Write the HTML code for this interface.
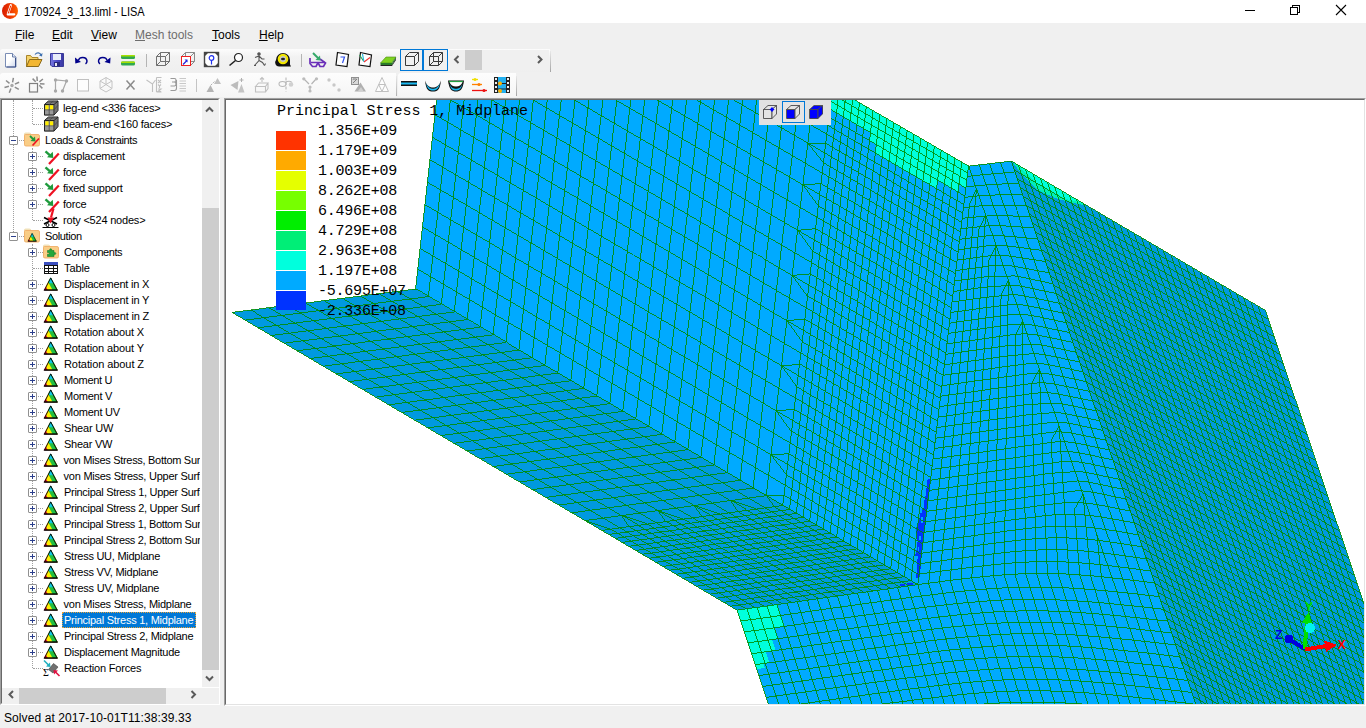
<!DOCTYPE html>
<html><head><meta charset="utf-8"><title>170924_3_13.liml - LISA</title>
<style>

html,body{margin:0;padding:0}
body{width:1366px;height:728px;overflow:hidden;position:relative;background:#f0f0f0;font-family:"Liberation Sans",sans-serif;font-size:12px;color:#000}
.abs{position:absolute}
#title{left:0;top:0;width:1366px;height:23px;background:#fff}
#title .t{left:23.5px;top:4.5px;font-size:12px;white-space:nowrap;transform:scaleX(0.918);transform-origin:0 0}
#menu span{position:absolute;top:28px;font-size:12px;white-space:nowrap}
#menu u{text-decoration:underline;text-underline-offset:1px}
.tb{background:#f8f8f8;border-radius:3px 0 0 3px}
#tree{left:0;top:98px;width:220px;height:607px;background:#fff;box-sizing:border-box;border:1px solid;border-color:#a0a0a0 #fff #fff #a0a0a0;overflow:hidden}
#treein{left:0;top:0;right:0;bottom:0;border:1px solid;border-color:#696969 #fff #fff #696969}
#tree .row{position:absolute;left:0;height:16px;line-height:16px;font-size:11px;white-space:nowrap}
#tree .lbl{position:absolute;top:0;height:16px;padding:0 1px}
#tree .sel{background:#0078d7;outline:1px dotted #e8a33a;outline-offset:-1px}
.exp{position:absolute;width:9px;height:9px;box-sizing:border-box;border:1px solid #919191;background:#fff;border-radius:1px}
.exp i{position:absolute;left:1px;top:3px;width:5px;height:1px;background:#2b3f8c}
.exp b{position:absolute;left:3px;top:1px;width:1px;height:5px;background:#2b3f8c}
.dotv{position:absolute;width:0;border-left:1px dotted #a0a0a0}
.doth{position:absolute;height:0;border-top:1px dotted #a0a0a0}
#vpb{left:224px;top:98px;width:1142px;height:608px;box-sizing:border-box;border:1px solid;border-color:#a0a0a0 #fff #fff #a0a0a0;background:#fff}
#vpb div{left:0;top:0;right:0;bottom:0;border:1px solid;border-color:#696969 #e3e3e3 #e3e3e3 #696969}
#status{left:4px;top:711px;font-size:12px;letter-spacing:0.09px;white-space:nowrap}

</style></head>
<body>
<div id="title" class="abs"><svg class="abs" style="left:1px;top:2px" width="18" height="18" viewBox="1 2 18 18"><linearGradient id="glogo" x1="0" y1="0" x2="1" y2="0"><stop offset="0" stop-color="#d81c00"/><stop offset="0.55" stop-color="#f03a00"/><stop offset="1" stop-color="#ff6200"/></linearGradient><circle cx="10" cy="10.900" r="8" fill="url(#glogo)"/><path d="M10.800 5.300L7.800 14.300H14.200" fill="none" stroke="#fff" stroke-width="2.300" stroke-linecap="round" stroke-linejoin="round"/><path d="M10.700 6L8.300 13.200" fill="none" stroke="#e83000" stroke-width="1" stroke-linecap="round"/></svg><div class="abs t">170924_3_13.liml - LISA</div><svg class="abs" style="left:1240px;top:0" width="126" height="23" viewBox="1240 0 126 23" shape-rendering="crispEdges" fill="none" stroke="#000" stroke-width="1"><path d="M1245 10.500h10"/><path d="M1290.500 7.500h7v7h-7z"/><path d="M1292.500 7.500v-2h7v7h-2"/><path d="M1336 5l10 10M1346 5l-10 10" shape-rendering="auto" stroke-width="1.100"/></svg></div><div id="menu"><span style="left:15px;color:#000"><u>F</u>ile</span><span style="left:52px;color:#000"><u>E</u>dit</span><span style="left:91px;color:#000"><u>V</u>iew</span><span style="left:135px;color:#6d6d6d"><u>M</u>esh tools</span><span style="left:212px;color:#000"><u>T</u>ools</span><span style="left:259px;color:#000"><u>H</u>elp</span></div><div class="abs tb" style="left:0;top:49px;width:550px;height:23px;background:linear-gradient(#fcfcfc,#f2f2f2 35%,#efefef)"></div><div class="abs" style="left:550px;top:51px;width:1px;height:21px;background:linear-gradient(#e8e8e8,#a4a4a4)"></div><div class="abs tb" style="left:0;top:73px;width:396px;height:24px;background:linear-gradient(#fdfdfd,#f5f5f5)"></div><div class="abs" style="left:396px;top:76px;width:1px;height:20px;background:linear-gradient(#e8e8e8,#b0b0b0)"></div><div class="abs tb" style="left:398px;top:73px;width:118px;height:24px;background:linear-gradient(#fdfdfd,#f5f5f5)"></div><div class="abs" style="left:516px;top:76px;width:1px;height:20px;background:linear-gradient(#e8e8e8,#a4a4a4)"></div><div class="abs" style="left:400px;top:49px;width:23px;height:22px;box-sizing:border-box;border:1px solid #0078d7;background:#f0f0f0"></div><div class="abs" style="left:423px;top:49px;width:25px;height:22px;box-sizing:border-box;border:1px solid #0078d7;background:#f0f0f0"></div><div class="abs" style="left:449px;top:50px;width:100px;height:20px;background:#f0f0f0"></div><div class="abs" style="left:465px;top:50px;width:17px;height:20px;background:#cdcdcd"></div><svg class="abs" style="left:449px;top:50px" width="100" height="20" viewBox="449 50 100 20" fill="none" stroke="#5a5a5a" stroke-width="2"><path d="M458.500 56l-3.500 3.500 3.500 3.500"/><path d="M538 56l3.500 3.500-3.500 3.500"/></svg><div class="abs" style="left:146px;top:54px;width:1px;height:13px;background:#b4b4b4"></div><div class="abs" style="left:301px;top:54px;width:1px;height:13px;background:#b4b4b4"></div><div class="abs" style="left:196px;top:79px;width:1px;height:13px;background:#c4c4c4"></div><svg class="abs" style="left:0;top:48px" width="560" height="50" viewBox="0 48 560 50"><g transform="translate(5,53)"><linearGradient id="gdoc" x1="0" y1="0" x2="1" y2="1"><stop offset="0.45" stop-color="#fff"/><stop offset="1" stop-color="#c9d4ea"/></linearGradient><path d="M0.500 0.500h7l3.500 3.500v10h-10.500z" fill="url(#gdoc)" stroke="#7a8db5"/><path d="M7.500 0.500v3.500h3.500" fill="#dfe6f5" stroke="#6a7fa8"/><path d="M10.500 5v9h-9" fill="none" stroke="#3a4f88"/></g><g transform="translate(26,52)"><path d="M0.500 14.500v-11h4l1.500 2h6v9z" fill="#f5d36b" stroke="#a8842a"/><path d="M0.500 14.500l3-7h12.500l-3.500 7z" fill="#f2b632" stroke="#8a6a1a"/><path d="M9 2.500c2-2.500 5-2 6 0.500" fill="none" stroke="#3d6fb0" stroke-width="1.200"/><path d="M16.500 1l-0.500 3.500-3-1z" fill="#3d6fb0"/></g><g transform="translate(50,53)"><linearGradient id="gsav" x1="0" y1="0" x2="1" y2="0"><stop offset="0" stop-color="#7a7ae0"/><stop offset="0.5" stop-color="#4a49c8"/><stop offset="1" stop-color="#3a399f"/></linearGradient><path d="M0.500 0.500h13v13h-11.500l-1.500-1.500z" fill="url(#gsav)" stroke="#3a3a98"/><rect x="3" y="1" width="8" height="6" fill="#e8ecfa"/><rect x="4" y="9" width="6" height="4.500" fill="#2b2a80"/><rect x="5" y="10" width="2" height="3" fill="#e8e8f0"/></g><g transform="translate(74,55)"><path d="M4.500 5.500c0.500-4 8-4.500 8.500 0.500c0 1.500-0.500 2.200-1.500 2.800" fill="none" stroke="#00008b" stroke-width="1.500"/><path d="M1 2.500l0.300 6 5.700-1.500z" fill="#00008b"/></g><g transform="translate(97,55)"><path d="M10 5.500c-0.500-4-8-4.500-8.500 0.500c0 1.500 0.500 2.200 1.500 2.800" fill="none" stroke="#00008b" stroke-width="1.500"/><path d="M13.500 2.500l-0.300 6-5.700-1.500z" fill="#00008b"/></g><g transform="translate(121,55)"><rect x="0" y="0" width="14" height="4" rx="1.500" fill="#2fa84f"/><rect x="0" y="0" width="14" height="1.500" rx="0.700" fill="#a6e000"/><rect x="0" y="6.500" width="14" height="4" rx="1.500" fill="#2fa84f"/><rect x="0" y="6.500" width="14" height="1.500" rx="0.700" fill="#a6e000"/></g><g transform="translate(156,52)"><g fill="none" stroke="#707070" stroke-width="1"><path d="M0.500 4.500h9v9h-9z"/><path d="M4.500 0.500h9v9h-9z"/><path d="M0.500 4.500l4-4M9.500 4.500l4-4M9.500 13.500l4-4M0.500 13.500l4-4"/></g></g><g transform="translate(181,52)"><g fill="none" stroke="#8a8a8a" stroke-width="1"><path d="M0.500 4.500h9v9h-9z"/><path d="M4.500 0.500h9v9h-9z"/><path d="M0.500 4.500l4-4M9.500 4.500l4-4M9.500 13.500l4-4M0.500 13.500l4-4"/></g><rect x="0.500" y="4.500" width="9" height="9" fill="#fff" stroke="#ee2020"/><path d="M2 12.500l4-4" stroke="#2222dd" stroke-width="1.200"/><path d="M6.500 7.500v3l-3-3z" fill="#2222dd"/></g><g transform="translate(204,52)"><rect x="0.500" y="0.500" width="14" height="14" fill="#fff" stroke="#444" stroke-width="1.400"/><path d="M1 1h3l-3 3zM14 1h-3l3 3zM1 14h3l-3-3zM14 14h-3l3-3z" fill="#444"/><circle cx="7.500" cy="6" r="2.300" fill="none" stroke="#2233ee" stroke-width="1.200"/><path d="M7.500 8.500v4" stroke="#2233ee" stroke-width="1.200"/></g><g transform="translate(229,52)"><circle cx="9.500" cy="5.500" r="4" fill="#fff" stroke="#222" stroke-width="1.200"/><path d="M6.500 8.500l-6 5" stroke="#222" stroke-width="1.600"/></g><g transform="translate(253,52)"><g fill="none" stroke="#555" stroke-width="1.100"><circle cx="6" cy="2" r="1.200" fill="#555"/><path d="M2 5.500l4-1.500 3 3 2.500 0M6 4v4.500l-4.500 5M6 8.500l3.500 2 2 3"/><path d="M1 13.500l2 0M11.500 13.500l1-2"/></g></g><g transform="translate(275,52)"><path d="M1 8a7 7 0 1 1 14 0v4.500l1 2h-12a4 4 0 0 1-3-6.500z" fill="#111"/><circle cx="8" cy="7" r="5.300" fill="#f2e600"/><circle cx="8" cy="7" r="3" fill="#c8c8c8"/><ellipse cx="8" cy="7" rx="2" ry="1.300" fill="#222"/></g><g transform="translate(309,52)"><path d="M1 6v5.500l2.500 3h3.500l1.500-3h1l1.500 3h3.500l2-3.500-5.500-4" fill="none" stroke="#6a2fb8" stroke-width="1.700"/><path d="M2 10.500h14" stroke="#6a2fb8" stroke-width="1.500"/><path d="M4 1l5.500 5.500" stroke="#35a86a" stroke-width="2"/><path d="M11.500 8.500l-5-0.500 4.500-4.500z" fill="#35a86a"/></g><g transform="translate(335,52)"><path d="M2.500 0.500l11 2-1.500 12-11-1.500z" fill="#fff" stroke="#111" stroke-width="1.200"/><path d="M5.500 5h4l-2 6" fill="none" stroke="#3355ee" stroke-width="1.200"/></g><g transform="translate(358,52)"><path d="M2.500 0.500l11 2.500-1.500 11.500-11-1.500z" fill="#fff" stroke="#111" stroke-width="1.200"/><path d="M1.500 3l4 6" stroke="#28a050" stroke-width="1.100" fill="none"/><path d="M4.500 2l1.500 8" stroke="#20b8e0" stroke-width="1.100" fill="none"/><path d="M6 10l6-4.500" stroke="#ee3333" stroke-width="1.100" fill="none"/></g><g transform="translate(380,54)"><path d="M0.500 9l5.500-6h10l-4.500 6z" fill="#7ed321" stroke="#4a8a10" stroke-width="0.600"/><path d="M0.500 9h11.500l4-6v1.500l-4 6.500h-11.500z" fill="#2a7a2a"/><path d="M0.500 11h11.500l4-6.500v1.500l-4 6h-11.500z" fill="#222"/></g><g transform="translate(405,52)"><g fill="none" stroke="#3a3a3a" stroke-width="1"><path d="M0.500 4.500h9v9h-9z"/><path d="M0.500 4.500l4-4h9l-4 4"/><path d="M13.500 0.500v9l-4 4"/></g></g><g transform="translate(429,52)"><g fill="none" stroke="#3a3a3a" stroke-width="1"><path d="M0.500 4.500h9v9h-9z"/><path d="M4.500 0.500h9v9h-9z"/><path d="M0.500 4.500l4-4M9.500 4.500l4-4M9.500 13.500l4-4M0.500 13.500l4-4"/></g></g><g transform="translate(4,77)"><path d="M8.6 5.3L9.4 0.8M10.9 7.1L15.1 5.2M10.8 10.1L14.8 12.4M6.9 11.5L5.3 15.8M4.9 9.3L0.5 10.5M5.5 6.4L2.0 3.5" stroke="#8c8c8c" stroke-width="1.500" fill="none"/><circle cx="8" cy="8.500" r="1.700" fill="#a8a8a8"/></g><g transform="translate(29,77)"><rect x="0.500" y="6.500" width="8" height="8.500" fill="none" stroke="#808080" stroke-width="1.200"/><path d="M8.3 4.0L7.9 -0.5M6.7 4.7L3.6 1.6M10.4 4.9L13.9 2.0M11.0 6.7L15.5 7.1M10.3 8.3L13.4 11.4" stroke="#8c8c8c" stroke-width="1.500" fill="none"/></g><g transform="translate(53,78)"><path d="M2.500 13v-11l11 1-4 10" fill="none" stroke="#a8a8a8" stroke-width="1.200"/><circle cx="2.5" cy="13" r="1.700" fill="#a8a8a8"/><circle cx="2.5" cy="2" r="1.700" fill="#a8a8a8"/><circle cx="13.5" cy="3" r="1.700" fill="#a8a8a8"/><circle cx="9.5" cy="13" r="1.700" fill="#a8a8a8"/></g><g transform="translate(77,79)"><rect x="0.500" y="0.500" width="11" height="11.500" fill="#fdfdfd" stroke="#c0c0c0" stroke-width="1"/></g><g transform="translate(99,77)"><g fill="none" stroke="#c4c4c4" stroke-width="1"><path d="M7 0.500l6 3.500v7.500l-6 3.500-6-3.500v-7.500z"/><path d="M7 0.500v7l6 4M7 7.500l-6 4M1 4l6 3.500 6-3.500"/></g></g><g transform="translate(126,80)"><path d="M0.500 0.500l8 9M8.500 0.500l-8 9" stroke="#8a8a8a" stroke-width="1.500" fill="none"/></g><g transform="translate(146,77)"><g fill="none" stroke="#c0c0c0" stroke-width="1.100"><path d="M0.500 3l6 4v8M6.500 7l3-4"/><path d="M10.500 0.500h5M10.500 15h5M10.500 0.500v14.500"/><path d="M12 3l3 3M15 3l-3 3M12 7.500l1.500 1.500 1.500-1.500M13.500 9v2M12 12h3l-3 2.500h3"/></g></g><g transform="translate(170,77)"><g fill="none" stroke="#9a9a9a" stroke-width="1.100"><path d="M0.500 1.500h4c2 0 2 3 0 3.500c2 0.500 2 3.500 0 4h-4M2 5h3M0.500 13.500h4c1.500 0 2-1 2-2.500v-8"/></g><g stroke="#c8c8c8" stroke-width="1"><path d="M9.500 1.500h6.500M9.500 4h6.500M9.500 6.500h6.500M9.500 9h6.500M9.500 11.500h6.500M9.500 14h6.500"/></g></g><g transform="translate(206,77)"><path d="M0.500 15l4-7 3.500 7z" fill="#b4b4b4"/><path d="M8 7l3.500-6 3.500 6z" fill="#c0c0c0"/><path d="M5 8l4-4" stroke="#b0b0b0" stroke-dasharray="1.500 1"/></g><g transform="translate(230,77)"><path d="M0.500 8l8-4-1 9z" fill="#bcbcbc"/><path d="M8 15.500l3.500-8.500 3 8.500z" fill="#c4c4c4"/><path d="M11.500 1v4M9.500 3h4" stroke="#b0b0b0"/></g><g transform="translate(255,77)"><g fill="none" stroke="#c0c0c0" stroke-width="1.100"><path d="M0.500 9.500l3-3.500h9.500l-2.500 3.500zM0.500 9.500v5.500h10v-5.500M13 6v5.500l-2.500 3.500"/><path d="M7 5v-4M5 2.500l2-2 2 2"/></g></g><g transform="translate(278,77)"><g fill="none" stroke="#b8b8b8" stroke-width="1.100"><ellipse cx="4.500" cy="7" rx="3.500" ry="2.500"/><path d="M8 0.500v14" stroke-dasharray="3 1.500"/><path d="M7 5.500c3-2 6-1.500 7 0"/></g><circle cx="13" cy="7.500" r="2.300" fill="#d0d0d0"/></g><g transform="translate(302,77)"><g stroke="#b4b4b4" stroke-width="1.200" fill="none"><path d="M1.500 1.500l5.500 5.500M14.500 1.500l-5 5.500M8 9v5"/></g><circle cx="1.800" cy="1.800" r="1.600" fill="#bcbcbc"/><circle cx="14.500" cy="1.800" r="1.600" fill="#bcbcbc"/><circle cx="8" cy="10" r="1.600" fill="#bcbcbc"/><circle cx="8" cy="14" r="1.600" fill="#bcbcbc"/></g><g transform="translate(327,77)"><circle cx="2" cy="3" r="1.700" fill="#c8c8c8"/><circle cx="7" cy="8" r="1.700" fill="#c8c8c8"/><circle cx="12" cy="13" r="1.700" fill="#c8c8c8"/></g><g transform="translate(351,77)"><rect x="0.500" y="0.500" width="7" height="7" fill="#d8d8d8" stroke="#909090"/><path d="M2 6l4-4M2 2.500v-0.500h3.500" stroke="#808080" fill="none"/><path d="M3.500 14.500l6-9 5.500 9z" fill="#b0b0b0"/><path d="M7 14l3-4 2.500 4z" fill="#d0d0d0"/></g><g transform="translate(375,77)"><g fill="#fdfdfd" stroke="#c0c0c0" stroke-width="1"><path d="M7 0.500l6.500 14h-13z"/><path d="M3.700 7.500h6.500l-3.200 7z" fill="none"/></g></g><g transform="translate(401,81)"><rect x="0" y="0" width="16" height="5" fill="#111"/><rect x="0" y="1.500" width="16" height="2" fill="#1ab8f0"/></g><g transform="translate(425,80)"><path d="M0 0.500c2 6 5 7 8 7s6-1 8-7c-1 10-4 11-8 11s-7-1-8-11z" fill="#111"/><path d="M1 3c2 4.500 4.500 5.800 7 5.800s5-1.300 7-5.800c-1.500 6.500-4 7.500-7 7.500s-5.500-1-7-7.500z" fill="#1ab8f0"/></g><g transform="translate(448,80)"><path d="M0 0.500h16c-1 9-4 11-8 11s-7-2-8-11z" fill="#111"/><path d="M1.500 2h13c-1 3-3.500 4.500-6.500 4.500s-5.500-1.500-6.500-4.500z" fill="#fff"/><path d="M1 1.500h14" stroke="#22a040" stroke-width="1.200"/><path d="M1.500 4c2 4 4 4.800 6.500 4.800s4.500-0.800 6.500-4.800c-1.500 5.500-3.500 6.500-6.500 6.500s-5-1-6.500-6.500z" fill="#1ab8f0"/></g><g transform="translate(472,77)"><path d="M0 2.500h6" stroke="#f0e000" stroke-width="1.300"/><circle cx="3" cy="2.500" r="1.500" fill="#f0e000"/><path d="M0 7.500h10" stroke="#ff8000" stroke-width="1.300"/><circle cx="7" cy="7.500" r="1.600" fill="#ff8000"/><path d="M0 13.500h15" stroke="#ee1111" stroke-width="1.300"/><circle cx="12" cy="13.500" r="1.600" fill="#ee1111"/></g><g transform="translate(494,77)"><rect x="0" y="0" width="16" height="16" fill="#222"/><rect x="4" y="0" width="8" height="16" fill="#22b0f0"/><path d="M4 6.500h8M4 12h8" stroke="#222" stroke-width="1"/><circle cx="6" cy="6.500" r="2" fill="#ffb000"/><circle cx="6" cy="14" r="2" fill="#ffb000"/><rect x="1" y="1" width="2" height="2" fill="#f0f0f0"/><rect x="1" y="5" width="2" height="2" fill="#f0f0f0"/><rect x="1" y="9" width="2" height="2" fill="#f0f0f0"/><rect x="1" y="13" width="2" height="2" fill="#f0f0f0"/><rect x="13" y="1" width="2" height="2" fill="#f0f0f0"/><rect x="13" y="5" width="2" height="2" fill="#f0f0f0"/><rect x="13" y="9" width="2" height="2" fill="#f0f0f0"/><rect x="13" y="13" width="2" height="2" fill="#f0f0f0"/></g></svg><div id="tree" class="abs"><div id="treein" class="abs"><div class="abs" style="left:0;top:0;width:198px;height:587px;overflow:hidden"><div class="dotv" style="left:11px;top:0;height:136px"></div><div class="dotv" style="left:30px;top:0;height:24px"></div><div class="dotv" style="left:30px;top:48px;height:72px"></div><div class="dotv" style="left:30px;top:144px;height:424px"></div><div class="doth" style="left:31px;top:8px;width:10px"></div><svg class="abs" style="left:41px;top:0px;overflow:visible" width="16" height="16" viewBox="0 0 16 16"><path d="M1 4.500L5 1h10v10l-4 4.500H1z" fill="#8c8c8c"/><path d="M1.500 4.500h9.500v10.500h-9.500z" fill="#9a9a9a" stroke="#222" stroke-width="1"/><path d="M1.500 4.500L5.500 1h9.500L11 4.500M15 1v9.500L11 15" fill="none" stroke="#222" stroke-width="1"/><path d="M6.200 4.500v10.500M1.500 9.800h9.500M6.200 4.500l4-3.500M3.500 2.800h9.500M11 9.800l4-4.500M13 2.800v10" fill="none" stroke="#444" stroke-width="0.700"/><rect x="2.300" y="5.300" width="3.300" height="4" fill="#ffee00"/><rect x="6.900" y="5.300" width="3.300" height="4" fill="#ffee00"/></svg><div class="row" style="top:0px"><span class="lbl" style="left:60px;letter-spacing:-0.143px">leg-end &lt;336 faces&gt;</span></div><div class="doth" style="left:31px;top:24px;width:10px"></div><svg class="abs" style="left:41px;top:16px;overflow:visible" width="16" height="16" viewBox="0 0 16 16"><path d="M1 4.500L5 1h10v10l-4 4.500H1z" fill="#8c8c8c"/><path d="M1.500 4.500h9.500v10.500h-9.500z" fill="#9a9a9a" stroke="#222" stroke-width="1"/><path d="M1.500 4.500L5.500 1h9.500L11 4.500M15 1v9.500L11 15" fill="none" stroke="#222" stroke-width="1"/><path d="M6.200 4.500v10.500M1.500 9.800h9.500M6.200 4.500l4-3.500M3.500 2.800h9.500M11 9.800l4-4.500M13 2.800v10" fill="none" stroke="#444" stroke-width="0.700"/><rect x="2.300" y="5.300" width="3.300" height="4" fill="#ffee00"/><rect x="6.900" y="5.300" width="3.300" height="4" fill="#ffee00"/></svg><div class="row" style="top:16px"><span class="lbl" style="left:60px;letter-spacing:-0.192px">beam-end &lt;160 faces&gt;</span></div><div class="doth" style="left:12px;top:40px;width:10px"></div><div class="exp" style="left:7px;top:36px"><i></i></div><svg class="abs" style="left:22px;top:32px;overflow:visible" width="16" height="16" viewBox="0 0 16 16"><path d="M0.500 13.500v-11.500q0-1 1-1h4q1 0 1.300 1l0.300 1h-6" fill="#f6e7c4" stroke="#ecd9a8" stroke-width="0.800"/><path d="M1.500 2.500h12.500q1.500 0 1.500 1.500v8.500q0 1.500-1.500 1.500h-12q-1.500 0-1.500-1.500v-9q0-1 1-1z" fill="#f9cd86" stroke="#f0ae68" stroke-width="0.900"/><path d="M6 4l4 4" stroke="#1f9a3c" stroke-width="1.800"/><path d="M11.500 9.500l-5-0.500 4.500-4.500z" fill="#1f9a3c"/><path d="M8.500 13.500l6.500-7" stroke="#ee1122" stroke-width="1.700"/></svg><div class="row" style="top:32px"><span class="lbl" style="left:42px;letter-spacing:-0.361px">Loads &amp; Constraints</span></div><div class="doth" style="left:31px;top:56px;width:10px"></div><div class="exp" style="left:26px;top:52px"><i></i><b></b></div><svg class="abs" style="left:41px;top:48px;overflow:visible" width="16" height="16" viewBox="0 0 16 16"><path d="M2.500 3.300l4.500 4" stroke="#1f9a3c" stroke-width="2.400"/><path d="M10.300 10l-6.300-0.700 5.800-5.600z" fill="#1f9a3c"/><path d="M6 16l9.800-10.500" stroke="#ee1122" stroke-width="2.200"/></svg><div class="row" style="top:48px"><span class="lbl" style="left:60px;letter-spacing:-0.261px">displacement</span></div><div class="doth" style="left:31px;top:72px;width:10px"></div><div class="exp" style="left:26px;top:68px"><i></i><b></b></div><svg class="abs" style="left:41px;top:64px;overflow:visible" width="16" height="16" viewBox="0 0 16 16"><path d="M2.500 3.300l4.500 4" stroke="#1f9a3c" stroke-width="2.400"/><path d="M10.300 10l-6.300-0.700 5.800-5.600z" fill="#1f9a3c"/><path d="M6 16l9.800-10.500" stroke="#ee1122" stroke-width="2.200"/></svg><div class="row" style="top:64px"><span class="lbl" style="left:60px;letter-spacing:-0.214px">force</span></div><div class="doth" style="left:31px;top:88px;width:10px"></div><div class="exp" style="left:26px;top:84px"><i></i><b></b></div><svg class="abs" style="left:41px;top:80px;overflow:visible" width="16" height="16" viewBox="0 0 16 16"><path d="M2.500 3.300l4.500 4" stroke="#1f9a3c" stroke-width="2.400"/><path d="M10.300 10l-6.300-0.700 5.800-5.600z" fill="#1f9a3c"/><path d="M6 16l9.800-10.500" stroke="#ee1122" stroke-width="2.200"/></svg><div class="row" style="top:80px"><span class="lbl" style="left:60px;letter-spacing:-0.26px">fixed support</span></div><div class="doth" style="left:31px;top:104px;width:10px"></div><div class="exp" style="left:26px;top:100px"><i></i><b></b></div><svg class="abs" style="left:41px;top:96px;overflow:visible" width="16" height="16" viewBox="0 0 16 16"><path d="M2.500 3.300l4.500 4" stroke="#1f9a3c" stroke-width="2.400"/><path d="M10.300 10l-6.300-0.700 5.800-5.600z" fill="#1f9a3c"/><path d="M6 16l9.800-10.500" stroke="#ee1122" stroke-width="2.200"/></svg><div class="row" style="top:96px"><span class="lbl" style="left:60px;letter-spacing:-0.214px">force</span></div><div class="doth" style="left:31px;top:120px;width:10px"></div><svg class="abs" style="left:41px;top:112px;overflow:visible" width="16" height="16" viewBox="0 0 16 16"><path d="M1 5.500l13 6.500M14 5.500l-13 6.500" stroke="#000" stroke-width="1.600"/><path d="M-0.500 15.500h16" stroke="#000" stroke-width="1"/><circle cx="4.500" cy="13" r="1.500" fill="#fff" stroke="#000"/><circle cx="10.500" cy="13" r="1.500" fill="#fff" stroke="#000"/><path d="M10.500 -3.500l-2.500 9" stroke="#ee1122" stroke-width="2.200"/><path d="M4.500 5.500h6.500l-3.500 6z" fill="#ee1122"/></svg><div class="row" style="top:112px"><span class="lbl" style="left:60px;letter-spacing:-0.202px">roty &lt;524 nodes&gt;</span></div><div class="doth" style="left:12px;top:136px;width:10px"></div><div class="exp" style="left:7px;top:132px"><i></i></div><svg class="abs" style="left:22px;top:128px;overflow:visible" width="16" height="16" viewBox="0 0 16 16"><path d="M0.500 13.500v-11.500q0-1 1-1h4q1 0 1.300 1l0.300 1h-6" fill="#f6e7c4" stroke="#ecd9a8" stroke-width="0.800"/><path d="M1.500 2.500h12.500q1.500 0 1.500 1.500v8.500q0 1.500-1.500 1.500h-12q-1.500 0-1.500-1.500v-9q0-1 1-1z" fill="#f9cd86" stroke="#f0ae68" stroke-width="0.900"/><g transform="translate(3.200,4.200) scale(0.640)"><clipPath id="tri"><path d="M7.700 1.300L14.800 14.300H0.800z"/></clipPath><g clip-path="url(#tri)"><rect width="16" height="16" fill="#ee1133"/><path d="M5 14.500L-1.900 2h20v12.500z" fill="#ffee00"/><path d="M9.800 14.500L2.900 2h16v12.500z" fill="#22c040"/><path d="M6.500 7.200L3 1h14v6.200z" fill="#10c8e0"/></g><path d="M7.700 2L14 13.900H1.500z" fill="none" stroke="#000" stroke-width="0.900" stroke-linejoin="miter"/><path d="M0.800 14.200h14" stroke="#000" stroke-width="1"/></g></svg><div class="row" style="top:128px"><span class="lbl" style="left:42px;letter-spacing:-0.383px">Solution</span></div><div class="doth" style="left:31px;top:152px;width:10px"></div><div class="exp" style="left:26px;top:148px"><i></i><b></b></div><svg class="abs" style="left:41px;top:144px;overflow:visible" width="16" height="16" viewBox="0 0 16 16"><path d="M0.500 13.500v-11.500q0-1 1-1h4q1 0 1.300 1l0.300 1h-6" fill="#f6e7c4" stroke="#ecd9a8" stroke-width="0.800"/><path d="M1.500 2.500h12.500q1.500 0 1.500 1.500v8.500q0 1.500-1.500 1.500h-12q-1.500 0-1.500-1.500v-9q0-1 1-1z" fill="#f9cd86" stroke="#f0ae68" stroke-width="0.900"/><path d="M4.500 12.500v-2.300q1.800 0.500 1.800-0.800t-1.800-0.800v-2.100h2.300q-0.500-1.800 0.900-1.800t0.900 1.800h2.400v2.300q1.800-0.600 1.800 0.700t-1.800 0.700v2.300z" fill="#22a83c" stroke="#157a2a" stroke-width="0.600"/></svg><div class="row" style="top:144px"><span class="lbl" style="left:61px;letter-spacing:-0.417px">Components</span></div><div class="doth" style="left:31px;top:168px;width:10px"></div><svg class="abs" style="left:41px;top:160px;overflow:visible" width="16" height="16" viewBox="0 0 16 16"><g shape-rendering="crispEdges"><rect x="1" y="2" width="14" height="12" fill="#111"/><rect x="1" y="2" width="14" height="3" fill="#3a4ec0"/><rect x="2" y="6" width="3" height="2" fill="#fff"/><rect x="2" y="9" width="3" height="2" fill="#fff"/><rect x="2" y="12" width="3" height="1" fill="#fff"/><rect x="6" y="6" width="4" height="2" fill="#fff"/><rect x="6" y="9" width="4" height="2" fill="#fff"/><rect x="6" y="12" width="4" height="1" fill="#fff"/><rect x="11" y="6" width="3" height="2" fill="#fff"/><rect x="11" y="9" width="3" height="2" fill="#fff"/><rect x="11" y="12" width="3" height="1" fill="#fff"/></g></svg><div class="row" style="top:160px"><span class="lbl" style="left:61px;letter-spacing:-0.119px">Table</span></div><div class="doth" style="left:31px;top:184px;width:10px"></div><div class="exp" style="left:26px;top:180px"><i></i><b></b></div><svg class="abs" style="left:41px;top:176px;overflow:visible" width="16" height="16" viewBox="0 0 16 16"><g clip-path="url(#tri)"><rect width="16" height="16" fill="#ee1133"/><path d="M5 14.500L-1.900 2h20v12.500z" fill="#ffee00"/><path d="M9.800 14.500L2.900 2h16v12.500z" fill="#22c040"/><path d="M6.500 7.200L3 1h14v6.200z" fill="#10c8e0"/></g><path d="M7.700 2L14 13.900H1.500z" fill="none" stroke="#000" stroke-width="0.900" stroke-linejoin="miter"/><path d="M0.800 14.200h14" stroke="#000" stroke-width="1"/></svg><div class="row" style="top:176px"><span class="lbl" style="left:61px;letter-spacing:-0.209px">Displacement in X</span></div><div class="doth" style="left:31px;top:200px;width:10px"></div><div class="exp" style="left:26px;top:196px"><i></i><b></b></div><svg class="abs" style="left:41px;top:192px;overflow:visible" width="16" height="16" viewBox="0 0 16 16"><g clip-path="url(#tri)"><rect width="16" height="16" fill="#ee1133"/><path d="M5 14.500L-1.900 2h20v12.500z" fill="#ffee00"/><path d="M9.800 14.500L2.900 2h16v12.500z" fill="#22c040"/><path d="M6.500 7.200L3 1h14v6.200z" fill="#10c8e0"/></g><path d="M7.700 2L14 13.900H1.500z" fill="none" stroke="#000" stroke-width="0.900" stroke-linejoin="miter"/><path d="M0.800 14.200h14" stroke="#000" stroke-width="1"/></svg><div class="row" style="top:192px"><span class="lbl" style="left:61px;letter-spacing:-0.197px">Displacement in Y</span></div><div class="doth" style="left:31px;top:216px;width:10px"></div><div class="exp" style="left:26px;top:212px"><i></i><b></b></div><svg class="abs" style="left:41px;top:208px;overflow:visible" width="16" height="16" viewBox="0 0 16 16"><g clip-path="url(#tri)"><rect width="16" height="16" fill="#ee1133"/><path d="M5 14.500L-1.900 2h20v12.500z" fill="#ffee00"/><path d="M9.800 14.500L2.900 2h16v12.500z" fill="#22c040"/><path d="M6.500 7.200L3 1h14v6.200z" fill="#10c8e0"/></g><path d="M7.700 2L14 13.900H1.500z" fill="none" stroke="#000" stroke-width="0.900" stroke-linejoin="miter"/><path d="M0.800 14.200h14" stroke="#000" stroke-width="1"/></svg><div class="row" style="top:208px"><span class="lbl" style="left:61px;letter-spacing:-0.173px">Displacement in Z</span></div><div class="doth" style="left:31px;top:232px;width:10px"></div><div class="exp" style="left:26px;top:228px"><i></i><b></b></div><svg class="abs" style="left:41px;top:224px;overflow:visible" width="16" height="16" viewBox="0 0 16 16"><g clip-path="url(#tri)"><rect width="16" height="16" fill="#ee1133"/><path d="M5 14.500L-1.900 2h20v12.500z" fill="#ffee00"/><path d="M9.800 14.500L2.900 2h16v12.500z" fill="#22c040"/><path d="M6.500 7.200L3 1h14v6.200z" fill="#10c8e0"/></g><path d="M7.700 2L14 13.900H1.500z" fill="none" stroke="#000" stroke-width="0.900" stroke-linejoin="miter"/><path d="M0.800 14.200h14" stroke="#000" stroke-width="1"/></svg><div class="row" style="top:224px"><span class="lbl" style="left:61px;letter-spacing:-0.122px">Rotation about X</span></div><div class="doth" style="left:31px;top:248px;width:10px"></div><div class="exp" style="left:26px;top:244px"><i></i><b></b></div><svg class="abs" style="left:41px;top:240px;overflow:visible" width="16" height="16" viewBox="0 0 16 16"><g clip-path="url(#tri)"><rect width="16" height="16" fill="#ee1133"/><path d="M5 14.500L-1.900 2h20v12.500z" fill="#ffee00"/><path d="M9.800 14.500L2.900 2h16v12.500z" fill="#22c040"/><path d="M6.500 7.200L3 1h14v6.200z" fill="#10c8e0"/></g><path d="M7.700 2L14 13.900H1.500z" fill="none" stroke="#000" stroke-width="0.900" stroke-linejoin="miter"/><path d="M0.800 14.200h14" stroke="#000" stroke-width="1"/></svg><div class="row" style="top:240px"><span class="lbl" style="left:61px;letter-spacing:-0.109px">Rotation about Y</span></div><div class="doth" style="left:31px;top:264px;width:10px"></div><div class="exp" style="left:26px;top:260px"><i></i><b></b></div><svg class="abs" style="left:41px;top:256px;overflow:visible" width="16" height="16" viewBox="0 0 16 16"><g clip-path="url(#tri)"><rect width="16" height="16" fill="#ee1133"/><path d="M5 14.500L-1.900 2h20v12.500z" fill="#ffee00"/><path d="M9.800 14.500L2.900 2h16v12.500z" fill="#22c040"/><path d="M6.500 7.200L3 1h14v6.200z" fill="#10c8e0"/></g><path d="M7.700 2L14 13.900H1.500z" fill="none" stroke="#000" stroke-width="0.900" stroke-linejoin="miter"/><path d="M0.800 14.200h14" stroke="#000" stroke-width="1"/></svg><div class="row" style="top:256px"><span class="lbl" style="left:61px;letter-spacing:-0.084px">Rotation about Z</span></div><div class="doth" style="left:31px;top:280px;width:10px"></div><div class="exp" style="left:26px;top:276px"><i></i><b></b></div><svg class="abs" style="left:41px;top:272px;overflow:visible" width="16" height="16" viewBox="0 0 16 16"><g clip-path="url(#tri)"><rect width="16" height="16" fill="#ee1133"/><path d="M5 14.500L-1.900 2h20v12.500z" fill="#ffee00"/><path d="M9.800 14.500L2.900 2h16v12.500z" fill="#22c040"/><path d="M6.500 7.200L3 1h14v6.200z" fill="#10c8e0"/></g><path d="M7.700 2L14 13.900H1.500z" fill="none" stroke="#000" stroke-width="0.900" stroke-linejoin="miter"/><path d="M0.800 14.200h14" stroke="#000" stroke-width="1"/></svg><div class="row" style="top:272px"><span class="lbl" style="left:61px;letter-spacing:-0.331px">Moment U</span></div><div class="doth" style="left:31px;top:296px;width:10px"></div><div class="exp" style="left:26px;top:292px"><i></i><b></b></div><svg class="abs" style="left:41px;top:288px;overflow:visible" width="16" height="16" viewBox="0 0 16 16"><g clip-path="url(#tri)"><rect width="16" height="16" fill="#ee1133"/><path d="M5 14.500L-1.900 2h20v12.500z" fill="#ffee00"/><path d="M9.800 14.500L2.900 2h16v12.500z" fill="#22c040"/><path d="M6.500 7.200L3 1h14v6.200z" fill="#10c8e0"/></g><path d="M7.700 2L14 13.900H1.500z" fill="none" stroke="#000" stroke-width="0.900" stroke-linejoin="miter"/><path d="M0.800 14.200h14" stroke="#000" stroke-width="1"/></svg><div class="row" style="top:288px"><span class="lbl" style="left:61px;letter-spacing:-0.255px">Moment V</span></div><div class="doth" style="left:31px;top:312px;width:10px"></div><div class="exp" style="left:26px;top:308px"><i></i><b></b></div><svg class="abs" style="left:41px;top:304px;overflow:visible" width="16" height="16" viewBox="0 0 16 16"><g clip-path="url(#tri)"><rect width="16" height="16" fill="#ee1133"/><path d="M5 14.500L-1.900 2h20v12.500z" fill="#ffee00"/><path d="M9.800 14.500L2.900 2h16v12.500z" fill="#22c040"/><path d="M6.500 7.200L3 1h14v6.200z" fill="#10c8e0"/></g><path d="M7.700 2L14 13.900H1.500z" fill="none" stroke="#000" stroke-width="0.900" stroke-linejoin="miter"/><path d="M0.800 14.200h14" stroke="#000" stroke-width="1"/></svg><div class="row" style="top:304px"><span class="lbl" style="left:61px;letter-spacing:-0.253px">Moment UV</span></div><div class="doth" style="left:31px;top:328px;width:10px"></div><div class="exp" style="left:26px;top:324px"><i></i><b></b></div><svg class="abs" style="left:41px;top:320px;overflow:visible" width="16" height="16" viewBox="0 0 16 16"><g clip-path="url(#tri)"><rect width="16" height="16" fill="#ee1133"/><path d="M5 14.500L-1.900 2h20v12.500z" fill="#ffee00"/><path d="M9.800 14.500L2.900 2h16v12.500z" fill="#22c040"/><path d="M6.500 7.200L3 1h14v6.200z" fill="#10c8e0"/></g><path d="M7.700 2L14 13.900H1.500z" fill="none" stroke="#000" stroke-width="0.900" stroke-linejoin="miter"/><path d="M0.800 14.200h14" stroke="#000" stroke-width="1"/></svg><div class="row" style="top:320px"><span class="lbl" style="left:61px;letter-spacing:-0.194px">Shear UW</span></div><div class="doth" style="left:31px;top:344px;width:10px"></div><div class="exp" style="left:26px;top:340px"><i></i><b></b></div><svg class="abs" style="left:41px;top:336px;overflow:visible" width="16" height="16" viewBox="0 0 16 16"><g clip-path="url(#tri)"><rect width="16" height="16" fill="#ee1133"/><path d="M5 14.500L-1.900 2h20v12.500z" fill="#ffee00"/><path d="M9.800 14.500L2.900 2h16v12.500z" fill="#22c040"/><path d="M6.500 7.200L3 1h14v6.200z" fill="#10c8e0"/></g><path d="M7.700 2L14 13.900H1.500z" fill="none" stroke="#000" stroke-width="0.900" stroke-linejoin="miter"/><path d="M0.800 14.200h14" stroke="#000" stroke-width="1"/></svg><div class="row" style="top:336px"><span class="lbl" style="left:61px;letter-spacing:-0.255px">Shear VW</span></div><div class="doth" style="left:31px;top:360px;width:10px"></div><div class="exp" style="left:26px;top:356px"><i></i><b></b></div><svg class="abs" style="left:41px;top:352px;overflow:visible" width="16" height="16" viewBox="0 0 16 16"><g clip-path="url(#tri)"><rect width="16" height="16" fill="#ee1133"/><path d="M5 14.500L-1.900 2h20v12.500z" fill="#ffee00"/><path d="M9.800 14.500L2.900 2h16v12.500z" fill="#22c040"/><path d="M6.500 7.200L3 1h14v6.200z" fill="#10c8e0"/></g><path d="M7.700 2L14 13.900H1.500z" fill="none" stroke="#000" stroke-width="0.900" stroke-linejoin="miter"/><path d="M0.800 14.200h14" stroke="#000" stroke-width="1"/></svg><div class="row" style="top:352px"><span class="lbl" style="left:60.6px;letter-spacing:-0.3px">von Mises Stress, Bottom Surface</span></div><div class="doth" style="left:31px;top:376px;width:10px"></div><div class="exp" style="left:26px;top:372px"><i></i><b></b></div><svg class="abs" style="left:41px;top:368px;overflow:visible" width="16" height="16" viewBox="0 0 16 16"><g clip-path="url(#tri)"><rect width="16" height="16" fill="#ee1133"/><path d="M5 14.500L-1.900 2h20v12.500z" fill="#ffee00"/><path d="M9.800 14.500L2.900 2h16v12.500z" fill="#22c040"/><path d="M6.500 7.200L3 1h14v6.200z" fill="#10c8e0"/></g><path d="M7.700 2L14 13.900H1.500z" fill="none" stroke="#000" stroke-width="0.900" stroke-linejoin="miter"/><path d="M0.800 14.200h14" stroke="#000" stroke-width="1"/></svg><div class="row" style="top:368px"><span class="lbl" style="left:60.6px;letter-spacing:-0.25px">von Mises Stress, Upper Surface</span></div><div class="doth" style="left:31px;top:392px;width:10px"></div><div class="exp" style="left:26px;top:388px"><i></i><b></b></div><svg class="abs" style="left:41px;top:384px;overflow:visible" width="16" height="16" viewBox="0 0 16 16"><g clip-path="url(#tri)"><rect width="16" height="16" fill="#ee1133"/><path d="M5 14.500L-1.900 2h20v12.500z" fill="#ffee00"/><path d="M9.800 14.500L2.900 2h16v12.500z" fill="#22c040"/><path d="M6.500 7.200L3 1h14v6.200z" fill="#10c8e0"/></g><path d="M7.700 2L14 13.900H1.500z" fill="none" stroke="#000" stroke-width="0.900" stroke-linejoin="miter"/><path d="M0.800 14.200h14" stroke="#000" stroke-width="1"/></svg><div class="row" style="top:384px"><span class="lbl" style="left:61px;letter-spacing:-0.31px">Principal Stress 1, Upper Surface</span></div><div class="doth" style="left:31px;top:408px;width:10px"></div><div class="exp" style="left:26px;top:404px"><i></i><b></b></div><svg class="abs" style="left:41px;top:400px;overflow:visible" width="16" height="16" viewBox="0 0 16 16"><g clip-path="url(#tri)"><rect width="16" height="16" fill="#ee1133"/><path d="M5 14.500L-1.900 2h20v12.500z" fill="#ffee00"/><path d="M9.800 14.500L2.900 2h16v12.500z" fill="#22c040"/><path d="M6.500 7.200L3 1h14v6.200z" fill="#10c8e0"/></g><path d="M7.700 2L14 13.900H1.500z" fill="none" stroke="#000" stroke-width="0.900" stroke-linejoin="miter"/><path d="M0.800 14.200h14" stroke="#000" stroke-width="1"/></svg><div class="row" style="top:400px"><span class="lbl" style="left:61px;letter-spacing:-0.31px">Principal Stress 2, Upper Surface</span></div><div class="doth" style="left:31px;top:424px;width:10px"></div><div class="exp" style="left:26px;top:420px"><i></i><b></b></div><svg class="abs" style="left:41px;top:416px;overflow:visible" width="16" height="16" viewBox="0 0 16 16"><g clip-path="url(#tri)"><rect width="16" height="16" fill="#ee1133"/><path d="M5 14.500L-1.900 2h20v12.500z" fill="#ffee00"/><path d="M9.800 14.500L2.900 2h16v12.500z" fill="#22c040"/><path d="M6.500 7.200L3 1h14v6.200z" fill="#10c8e0"/></g><path d="M7.700 2L14 13.900H1.500z" fill="none" stroke="#000" stroke-width="0.900" stroke-linejoin="miter"/><path d="M0.800 14.200h14" stroke="#000" stroke-width="1"/></svg><div class="row" style="top:416px"><span class="lbl" style="left:61px;letter-spacing:-0.34px">Principal Stress 1, Bottom Surface</span></div><div class="doth" style="left:31px;top:440px;width:10px"></div><div class="exp" style="left:26px;top:436px"><i></i><b></b></div><svg class="abs" style="left:41px;top:432px;overflow:visible" width="16" height="16" viewBox="0 0 16 16"><g clip-path="url(#tri)"><rect width="16" height="16" fill="#ee1133"/><path d="M5 14.500L-1.900 2h20v12.500z" fill="#ffee00"/><path d="M9.800 14.500L2.900 2h16v12.500z" fill="#22c040"/><path d="M6.500 7.200L3 1h14v6.200z" fill="#10c8e0"/></g><path d="M7.700 2L14 13.900H1.500z" fill="none" stroke="#000" stroke-width="0.900" stroke-linejoin="miter"/><path d="M0.800 14.200h14" stroke="#000" stroke-width="1"/></svg><div class="row" style="top:432px"><span class="lbl" style="left:61px;letter-spacing:-0.34px">Principal Stress 2, Bottom Surface</span></div><div class="doth" style="left:31px;top:456px;width:10px"></div><div class="exp" style="left:26px;top:452px"><i></i><b></b></div><svg class="abs" style="left:41px;top:448px;overflow:visible" width="16" height="16" viewBox="0 0 16 16"><g clip-path="url(#tri)"><rect width="16" height="16" fill="#ee1133"/><path d="M5 14.500L-1.900 2h20v12.500z" fill="#ffee00"/><path d="M9.800 14.500L2.900 2h16v12.500z" fill="#22c040"/><path d="M6.500 7.200L3 1h14v6.200z" fill="#10c8e0"/></g><path d="M7.700 2L14 13.900H1.500z" fill="none" stroke="#000" stroke-width="0.900" stroke-linejoin="miter"/><path d="M0.800 14.200h14" stroke="#000" stroke-width="1"/></svg><div class="row" style="top:448px"><span class="lbl" style="left:61px;letter-spacing:-0.257px">Stress UU, Midplane</span></div><div class="doth" style="left:31px;top:472px;width:10px"></div><div class="exp" style="left:26px;top:468px"><i></i><b></b></div><svg class="abs" style="left:41px;top:464px;overflow:visible" width="16" height="16" viewBox="0 0 16 16"><g clip-path="url(#tri)"><rect width="16" height="16" fill="#ee1133"/><path d="M5 14.500L-1.900 2h20v12.500z" fill="#ffee00"/><path d="M9.800 14.500L2.900 2h16v12.500z" fill="#22c040"/><path d="M6.500 7.200L3 1h14v6.200z" fill="#10c8e0"/></g><path d="M7.700 2L14 13.900H1.500z" fill="none" stroke="#000" stroke-width="0.900" stroke-linejoin="miter"/><path d="M0.800 14.200h14" stroke="#000" stroke-width="1"/></svg><div class="row" style="top:464px"><span class="lbl" style="left:61px;letter-spacing:-0.235px">Stress VV, Midplane</span></div><div class="doth" style="left:31px;top:488px;width:10px"></div><div class="exp" style="left:26px;top:484px"><i></i><b></b></div><svg class="abs" style="left:41px;top:480px;overflow:visible" width="16" height="16" viewBox="0 0 16 16"><g clip-path="url(#tri)"><rect width="16" height="16" fill="#ee1133"/><path d="M5 14.500L-1.900 2h20v12.500z" fill="#ffee00"/><path d="M9.800 14.500L2.900 2h16v12.500z" fill="#22c040"/><path d="M6.500 7.200L3 1h14v6.200z" fill="#10c8e0"/></g><path d="M7.700 2L14 13.900H1.500z" fill="none" stroke="#000" stroke-width="0.900" stroke-linejoin="miter"/><path d="M0.800 14.200h14" stroke="#000" stroke-width="1"/></svg><div class="row" style="top:480px"><span class="lbl" style="left:61px;letter-spacing:-0.214px">Stress UV, Midplane</span></div><div class="doth" style="left:31px;top:504px;width:10px"></div><div class="exp" style="left:26px;top:500px"><i></i><b></b></div><svg class="abs" style="left:41px;top:496px;overflow:visible" width="16" height="16" viewBox="0 0 16 16"><g clip-path="url(#tri)"><rect width="16" height="16" fill="#ee1133"/><path d="M5 14.500L-1.900 2h20v12.500z" fill="#ffee00"/><path d="M9.800 14.500L2.900 2h16v12.500z" fill="#22c040"/><path d="M6.500 7.200L3 1h14v6.200z" fill="#10c8e0"/></g><path d="M7.700 2L14 13.900H1.500z" fill="none" stroke="#000" stroke-width="0.900" stroke-linejoin="miter"/><path d="M0.800 14.200h14" stroke="#000" stroke-width="1"/></svg><div class="row" style="top:496px"><span class="lbl" style="left:60.6px;letter-spacing:-0.254px">von Mises Stress, Midplane</span></div><div class="doth" style="left:31px;top:520px;width:10px"></div><div class="exp" style="left:26px;top:516px"><i></i><b></b></div><svg class="abs" style="left:41px;top:512px;overflow:visible" width="16" height="16" viewBox="0 0 16 16"><g clip-path="url(#tri)"><rect width="16" height="16" fill="#ee1133"/><path d="M5 14.500L-1.900 2h20v12.500z" fill="#ffee00"/><path d="M9.800 14.500L2.900 2h16v12.500z" fill="#22c040"/><path d="M6.500 7.200L3 1h14v6.200z" fill="#10c8e0"/></g><path d="M7.700 2L14 13.900H1.500z" fill="none" stroke="#000" stroke-width="0.900" stroke-linejoin="miter"/><path d="M0.800 14.200h14" stroke="#000" stroke-width="1"/></svg><div class="abs sel" style="left:60px;top:512px;width:134px;height:16px"></div><div class="row" style="top:512px"><span class="lbl" style="left:61px;letter-spacing:-0.252px;color:#fff">Principal Stress 1, Midplane</span></div><div class="doth" style="left:31px;top:536px;width:10px"></div><div class="exp" style="left:26px;top:532px"><i></i><b></b></div><svg class="abs" style="left:41px;top:528px;overflow:visible" width="16" height="16" viewBox="0 0 16 16"><g clip-path="url(#tri)"><rect width="16" height="16" fill="#ee1133"/><path d="M5 14.500L-1.900 2h20v12.500z" fill="#ffee00"/><path d="M9.800 14.500L2.900 2h16v12.500z" fill="#22c040"/><path d="M6.500 7.200L3 1h14v6.200z" fill="#10c8e0"/></g><path d="M7.700 2L14 13.900H1.500z" fill="none" stroke="#000" stroke-width="0.900" stroke-linejoin="miter"/><path d="M0.800 14.200h14" stroke="#000" stroke-width="1"/></svg><div class="row" style="top:528px"><span class="lbl" style="left:61px;letter-spacing:-0.252px">Principal Stress 2, Midplane</span></div><div class="doth" style="left:31px;top:552px;width:10px"></div><div class="exp" style="left:26px;top:548px"><i></i><b></b></div><svg class="abs" style="left:41px;top:544px;overflow:visible" width="16" height="16" viewBox="0 0 16 16"><g clip-path="url(#tri)"><rect width="16" height="16" fill="#ee1133"/><path d="M5 14.500L-1.900 2h20v12.500z" fill="#ffee00"/><path d="M9.800 14.500L2.900 2h16v12.500z" fill="#22c040"/><path d="M6.500 7.200L3 1h14v6.200z" fill="#10c8e0"/></g><path d="M7.700 2L14 13.900H1.500z" fill="none" stroke="#000" stroke-width="0.900" stroke-linejoin="miter"/><path d="M0.800 14.200h14" stroke="#000" stroke-width="1"/></svg><div class="row" style="top:544px"><span class="lbl" style="left:61px;letter-spacing:-0.235px">Displacement Magnitude</span></div><div class="doth" style="left:31px;top:568px;width:10px"></div><svg class="abs" style="left:41px;top:560px;overflow:visible" width="16" height="16" viewBox="0 0 16 16"><path d="M5.500 9.500l5-6 4.500 3.500-5 6z" fill="#707070" stroke="#404040" stroke-width="0.600"/><path d="M1 0.500l4.500 4.500" stroke="#20b0c0" stroke-width="1.600"/><path d="M7.500 7l-4.500-0.500 4-4z" fill="#20b0c0"/><path d="M16.500 16l-4-4" stroke="#e01040" stroke-width="1.600"/><path d="M10.500 10l4.500 0.500-4 4z" fill="#e01040"/><text x="0" y="16" font-size="10" font-family="'Liberation Serif',serif" fill="#000">&#931;</text></svg><div class="row" style="top:560px"><span class="lbl" style="left:61px;letter-spacing:-0.193px">Reaction Forces</span></div></div><div class="abs" style="left:200px;top:0;width:17px;height:587px;background:#f0f0f0"></div><div class="abs" style="left:200px;top:108px;width:17px;height:462px;background:#cdcdcd"></div><svg class="abs" style="left:200px;top:0" width="17" height="587" viewBox="0 0 17 587" fill="none" stroke="#5a5a5a" stroke-width="2"><path d="M4 11.500l3.500-3.500 3.500 3.500"/><path d="M4 576.500l3.500 3.500 3.500-3.500"/></svg><div class="abs" style="left:0;top:588px;width:217px;height:16px;background:#f0f0f0"></div><div class="abs" style="left:17px;top:588px;width:147px;height:16px;background:#cdcdcd"></div><svg class="abs" style="left:0;top:587px" width="217" height="17" viewBox="0 0 217 17" fill="none" stroke="#5a5a5a" stroke-width="2"><path d="M11 4l-3.500 3.500 3.500 3.500"/><path d="M189.500 4l3.500 3.500-3.500 3.500"/></svg></div></div><div id="vpb" class="abs"><div class="abs"></div></div><div id="status" class="abs">Solved at 2017-10-01T11:38:39.33</div>
<svg width="1138" height="604" viewBox="226 100 1138 604" shape-rendering="crispEdges" style="position:absolute;left:226px;top:100px;background:#fff">
<defs><clipPath id="c1"><polygon points="1011.2,161 1265.4,310.4 1558.4,1182.4 1307.7,1033"/></clipPath><clipPath id="c2"><polygon points="968.5,166 1011.2,161 1198.5,712 771.1,712 737,610.2 917.8,584.6"/></clipPath><clipPath id="c3"><polygon points="462,-128 968.5,166 917.8,584.6 415.5,289"/></clipPath></defs>
<polygon points="1011.2,161 1265.4,310.4 1558.4,1182.4 1307.7,1033" fill="#0099e0"/>
<polygon points="1012,161 1086,205.5 1074,203 1058,199 1046,194 1038,190 1030,183 1023,176 1017,168" fill="#00eebb" clip-path="url(#c1)"/>
<polygon points="1017,164 1082,203 1066,199 1050,191 1038,184 1028,175 1021,169" fill="#00ffdd" clip-path="url(#c1)"/>
<path d="M1011.2 161L1307.7 1033M1018.4 165.3L1314.8 1037.3M1025.7 169.5L1322 1041.5M1032.9 173.8L1329.1 1045.8M1040.2 178L1336.3 1050M1047.4 182.3L1343.4 1054.3M1054.7 186.5L1350.6 1058.5M1061.9 190.8L1357.7 1062.8M1069.2 195.1L1364.9 1067.1M1076.4 199.3L1372 1071.3M1083.7 203.6L1379.2 1075.6M1090.9 207.9L1386.3 1079.9M1098.2 212.1L1393.5 1084.1M1105.4 216.4L1400.6 1088.4M1112.7 220.7L1407.8 1092.7M1120 224.9L1414.9 1096.9M1127.2 229.2L1422.1 1101.2M1134.5 233.5L1429.3 1105.5M1141.7 237.7L1436.4 1109.7M1149 242L1443.6 1114M1156.3 246.3L1450.8 1118.3M1163.5 250.5L1457.9 1122.5M1170.8 254.8L1465.1 1126.8M1178.1 259.1L1472.3 1131.1M1185.3 263.3L1479.4 1135.4M1192.6 267.6L1486.6 1139.6M1199.9 271.9L1493.8 1143.9M1207.2 276.2L1501 1148.2M1214.4 280.4L1508.1 1152.4M1221.7 284.7L1515.3 1156.7M1229 289L1522.5 1161M1236.3 293.3L1529.7 1165.3M1243.6 297.6L1536.8 1169.6M1250.8 301.8L1544 1173.8M1258.1 306.1L1551.2 1178.1M1265.4 310.4L1558.4 1182.4M1011.2 161L1265.4 310.4M1014.2 169.9L1268.4 319.3M1017.2 178.7L1271.4 328.1M1020.2 187.6L1274.3 337M1023.3 196.5L1277.3 345.9M1026.3 205.3L1280.3 354.7M1029.3 214.2L1283.3 363.6M1032.3 223L1286.2 372.4M1035.3 231.9L1289.2 381.3M1038.3 240.7L1292.2 390.1M1041.3 249.6L1295.2 399M1044.3 258.4L1298.1 407.8M1047.3 267.2L1301.1 416.6M1050.3 276.1L1304.1 425.5M1053.3 284.9L1307 434.3M1056.3 293.7L1310 443.1M1059.3 302.6L1313 452M1062.3 311.4L1315.9 460.8M1065.3 320.2L1318.9 469.6M1068.3 329L1321.9 478.4M1071.3 337.8L1324.8 487.2M1074.3 346.6L1327.8 496M1077.3 355.4L1330.7 504.8M1080.3 364.2L1333.7 513.6M1083.3 373L1336.6 522.4M1086.3 381.8L1339.6 531.2M1089.3 390.6L1342.6 540M1092.3 399.4L1345.5 548.8M1095.2 408.2L1348.5 557.6M1098.2 417L1351.4 566.4M1101.2 425.8L1354.4 575.2M1104.2 434.5L1357.3 584M1107.2 443.3L1360.3 592.7M1110.2 452.1L1363.2 601.5M1113.2 460.9L1366.2 610.3M1116.1 469.6L1369.1 619M1119.1 478.4L1372 627.8M1122.1 487.2L1375 636.6M1125.1 495.9L1377.9 645.3M1128 504.7L1380.9 654.1M1131 513.4L1383.8 662.8M1134 522.2L1386.8 671.6M1137 530.9L1389.7 680.3M1139.9 539.7L1392.6 689.1M1142.9 548.4L1395.6 697.8M1145.9 557.1L1398.5 706.5M1148.9 565.9L1401.4 715.3M1151.8 574.6L1404.4 724M1154.8 583.3L1407.3 732.7M1157.8 592L1410.2 741.4M1160.7 600.8L1413.2 750.2M1163.7 609.5L1416.1 758.9M1166.6 618.2L1419 767.6M1169.6 626.9L1421.9 776.3M1172.6 635.6L1424.9 785M1175.5 644.3L1427.8 793.7M1178.5 653L1430.7 802.4M1181.4 661.7L1433.6 811.1M1184.4 670.4L1436.6 819.8M1187.4 679.1L1439.5 828.5M1190.3 687.8L1442.4 837.2M1193.3 696.5L1445.3 845.9M1196.2 705.2L1448.2 854.6M1199.2 713.9L1451.2 863.3M1202.1 722.5L1454.1 871.9M1205.1 731.2L1457 880.6M1208 739.9L1459.9 889.3M1211 748.6L1462.8 898M1213.9 757.2L1465.7 906.6M1216.9 765.9L1468.6 915.3M1219.8 774.5L1471.6 924M1222.7 783.2L1474.5 932.6M1225.7 791.9L1477.4 941.3M1228.6 800.5L1480.3 949.9M1231.6 809.2L1483.2 958.6M1234.5 817.8L1486.1 967.2M1237.5 826.5L1489 975.9M1240.4 835.1L1491.9 984.5M1243.3 843.7L1494.8 993.1M1246.3 852.4L1497.7 1001.8M1249.2 861L1500.6 1010.4M1252.1 869.6L1503.5 1019M1255.1 878.2L1506.4 1027.7M1258 886.9L1509.3 1036.3M1260.9 895.5L1512.2 1044.9M1263.9 904.1L1515.1 1053.5M1266.8 912.7L1518 1062.1M1269.7 921.3L1520.9 1070.7M1272.6 929.9L1523.8 1079.3M1275.6 938.5L1526.7 1087.9M1278.5 947.1L1529.5 1096.5M1281.4 955.7L1532.4 1105.1M1284.3 964.3L1535.3 1113.7M1287.3 972.9L1538.2 1122.3M1290.2 981.5L1541.1 1130.9M1293.1 990.1L1544 1139.5M1296 998.7L1546.9 1148.1M1298.9 1007.3L1549.7 1156.7M1301.8 1015.9L1552.6 1165.3M1304.8 1024.4L1555.5 1173.8M1307.7 1033L1558.4 1182.4" fill="none" stroke="#008c00" stroke-width="0.85"/>
<polygon points="968.5,166 1011.2,161 1198.5,712 771.1,712 737,610.2 917.8,584.6" fill="#00aaff"/>
<polygon points="737,610.2 777.2,604.5 780.8,615.4 740.7,621.1" fill="#00ffdd"/>
<polygon points="740.7,621.1 780.8,615.4 784.5,626.3 744.3,632" fill="#00ffdd"/>
<polygon points="744.3,632 774.4,627.7 778.1,638.6 748,642.9" fill="#00ffdd"/>
<polygon points="748,642.9 772.1,639.5 775.7,650.4 751.6,653.8" fill="#00ffdd"/>
<polygon points="751.6,653.8 765.7,651.8 769.3,662.7 755.3,664.7" fill="#00ffdd"/>
<polygon points="755.3,664.7 763.3,663.6 764.8,667.9 756.7,669.1" fill="#00ffdd"/>
<path d="M967.2 176.5L973.2 175.8L979.2 175.1L985.2 174.6L991.2 174L997.2 173.5L1027.2 170.9L1056.5 168.3M966 186.9L972 186.2L978 185.6L984 185.1L990 184.7L996 184.4L1002 184L1032 182.4L1060 180.8M964.7 197.4L970.7 196.6L976.7 196L982.7 195.5L988.7 195.2L994.7 195L1000.7 194.8L1030.7 194.1L1060.7 193.3L1063.6 193.2M963.4 207.9L969.4 207L975.4 206.3L981.4 205.8L987.4 205.4L993.4 205.3L999.4 205.3L1005.4 205.3L1035.4 205.5L1065.4 205.6L1067.1 205.7M962.2 218.3L992.2 215.5L998.2 215.5L1004.2 215.7L1010.2 215.9L1040.2 217L1070.2 218.1L1070.7 218.1M960.9 228.8L990.9 225.5L996.9 225.5L1002.9 225.8L1008.9 226.2L1014.9 226.6L1044.9 228.6L1074.2 230.5M959.6 239.3L989.6 235.5L995.6 235.4L1001.6 235.7L1007.6 236.2L1013.6 236.7L1043.6 239.6L1073.6 242.6L1077.8 243M958.4 249.7L988.4 245.7L994.4 245.4L1000.4 245.5L1006.4 245.9L1012.4 246.6L1018.4 247.3L1048.4 251.2L1078.4 255L1081.4 255.4M957.1 260.2L987.1 256.1L993.1 255.5L999.1 255.3L1005.1 255.6L1011.1 256.2L1017.1 257.1L1023.1 258L1053.1 262.8L1083.1 267.6L1084.9 267.9M955.8 270.6L985.8 266.5L991.8 265.7L997.8 265.2L1003.8 265.2L1009.8 265.7L1015.8 266.6L1021.8 267.7L1027.8 268.8L1057.8 274.5L1087.8 280.2L1088.5 280.4M954.6 281.1L984.6 276.9L1014.6 275.9L1020.6 277L1026.6 278.2L1032.6 279.4L1062.6 285.8L1092 292M953.3 291.6L983.3 287.3L1013.3 285.1L1019.3 285.9L1025.3 287L1031.3 288.3L1061.3 294.6L1091.3 301L1095.6 301.9M952 302L982 297.8L1012 294.6L1018 295L1024 296L1030 297.1L1036 298.3L1066 304.7L1096 311L1099.2 311.7M950.8 312.5L980.8 308.3L1010.8 304.5L1016.8 304.5L1022.8 305L1028.8 306L1034.8 307.2L1040.8 308.4L1070.8 314.8L1100.8 321.1L1102.7 321.5M949.5 323L979.5 318.7L1009.5 314.7L1015.5 314.3L1021.5 314.3L1027.5 315L1033.5 316L1039.5 317.2L1045.5 318.5L1075.5 324.8L1105.5 331.2L1106.3 331.4M948.2 333.4L978.2 329.2L1008.2 325L1014.2 324.4L1020.2 324L1026.2 324.2L1032.2 325L1038.2 326.1L1044.2 327.3L1074.2 333.6L1104.2 340L1109.8 341.2M947 343.9L977 339.7L1007 335.4L1013 334.7L1019 334.1L1025 333.8L1031 334.2L1037 335L1043 336.2L1049 337.4L1079 343.7L1109 350.1L1113.4 351M945.7 354.4L975.7 350.1L1005.7 345.9L1035.7 344.1L1041.7 345.1L1047.7 346.2L1053.7 347.5L1083.7 353.8L1113.7 360.2L1116.9 360.9M944.4 364.8L974.4 360.6L1004.4 356.3L1034.4 353.5L1040.4 354.1L1046.4 355.1L1052.4 356.3L1058.4 357.5L1088.4 363.9L1118.4 370.3L1120.5 370.7M943.1 375.3L973.1 371.1L1003.1 366.8L1033.2 363.2L1039.2 363.4L1045.2 364.1L1051.2 365.2L1057.2 366.4L1063.2 367.6L1093.2 374L1123.2 380.3L1124.1 380.5M941.9 385.8L971.9 381.5L1001.9 377.3L1031.9 373.3L1037.9 373L1043.9 373.3L1049.9 374.1L1055.9 375.2L1061.9 376.4L1091.9 382.8L1121.9 389.1L1127.6 390.4M940.6 396.2L970.6 392L1000.6 387.7L1030.6 383.6L1036.6 383L1042.6 382.8L1048.6 383.2L1054.6 384.1L1060.6 385.3L1066.6 386.5L1096.6 392.9L1126.6 399.2L1131.2 400.2M939.3 406.7L969.3 402.4L999.3 398.2L1029.3 394L1035.3 393.3L1041.3 392.7L1047.3 392.7L1053.3 393.2L1059.3 394.2L1065.3 395.4L1071.3 396.6L1101.3 402.9L1131.3 409.3L1134.7 410M938.1 417.2L968.1 412.9L998.1 408.7L1028.1 404.4L1058.1 403.2L1064.1 404.2L1070.1 405.4L1076.1 406.7L1106.1 413L1136.1 419.4L1138.3 419.9M936.8 427.6L966.8 423.4L996.8 419.1L1026.8 414.9L1056.8 412.4L1062.8 413.2L1068.8 414.3L1074.8 415.5L1080.8 416.8L1110.8 423.1L1140.8 429.5L1141.9 429.7M935.5 438.1L965.5 433.8L995.5 429.6L1025.5 425.3L1055.5 422L1061.5 422.4L1067.5 423.2L1073.5 424.3L1079.5 425.6L1109.5 431.9L1139.5 438.3L1145.4 439.5M934.3 448.6L964.3 444.3L994.3 440.1L1024.3 435.8L1054.3 432L1060.3 431.9L1066.3 432.3L1072.3 433.3L1078.3 434.4L1084.3 435.6L1114.3 442L1144.3 448.4L1149 449.3M933 459L963 454.8L993 450.5L1023 446.3L1053 442.2L1059 441.7L1065 441.7L1071 442.3L1077 443.3L1083 444.5L1089 445.7L1119 452.1L1149 458.4L1152.5 459.2M931.7 469.5L961.7 465.2L991.7 461L1021.7 456.7L1051.7 452.6L1057.7 451.9L1063.7 451.5L1069.7 451.6L1075.7 452.3L1081.7 453.4L1087.7 454.6L1093.7 455.8L1123.7 462.2L1153.7 468.5L1156.1 469M930.5 480L960.5 475.7L990.5 471.5L1020.5 467.2L1050.5 463L1056.5 462.2L1062.5 461.6L1068.5 461.2L1074.5 461.5L1080.5 462.3L1086.5 463.4L1092.5 464.6L1122.5 471L1152.5 477.3L1159.6 478.8M929.2 490.4L959.2 486.2L989.2 481.9L1019.2 477.7L1049.2 473.4L1079.2 471.4L1085.2 472.3L1091.2 473.5L1097.2 474.7L1127.2 481L1157.2 487.4L1163.2 488.7M927.9 500.9L957.9 496.6L987.9 492.4L1017.9 488.1L1047.9 483.9L1077.9 480.9L1083.9 481.4L1089.9 482.4L1095.9 483.5L1101.9 484.8L1131.9 491.1L1161.9 497.5L1166.8 498.5M926.7 511.3L956.7 507.1L986.7 502.8L1016.7 498.6L1046.7 494.4L1076.7 490.8L1082.7 491L1088.7 491.6L1094.7 492.6L1100.7 493.8L1106.7 495L1136.7 501.4L1166.7 507.7L1170.3 508.5M925.4 521.8L955.4 517.6L985.4 513.3L1015.4 509.1L1045.4 504.9L1051.4 504.2L1057.4 503.5L1063.4 502.9L1069.4 502.6L1075.4 502.5L1081.4 502.7L1087.4 503.3L1093.4 504.1L1099.4 505L1105.4 506.1L1111.4 507.2L1117.4 508.4L1147.4 514.4L1173.9 519.7M924.1 532.3L954.1 528L984.1 523.8L1014.1 519.6L1044.1 515.8L1050.1 515.2L1056.1 514.7L1062.1 514.3L1068.1 514.2L1074.1 514.3L1080.1 514.6L1086.1 515.1L1092.1 515.7L1098.1 516.5L1104.1 517.5L1110.1 518.5L1116.1 519.5L1122.1 520.6L1152.1 526.2L1177.4 531M922.9 542.7L952.9 538.5L982.9 534.3L1012.9 530.2L1018.9 529.5L1024.9 528.7L1030.9 528.1L1036.9 527.4L1042.9 526.9L1048.9 526.5L1054.9 526.2L1060.9 526L1066.9 526L1072.9 526.1L1078.9 526.5L1084.9 526.9L1090.9 527.5L1096.9 528.3L1102.9 529.1L1108.9 530L1114.9 530.9L1120.9 531.9L1126.9 532.9L1156.9 538.1L1181 542.4M921.6 553.2L951.6 549L981.6 544.8L1011.6 541L1017.6 540.4L1023.6 539.7L1029.6 539.2L1035.6 538.7L1041.6 538.3L1047.6 538L1053.6 537.9L1059.6 537.8L1065.6 537.9L1071.6 538.1L1077.6 538.4L1083.6 538.9L1089.6 539.5L1095.6 540.1L1101.6 540.8L1107.6 541.6L1113.6 542.5L1119.6 543.3L1125.6 544.3L1131.6 545.2L1137.6 546.1L1167.6 551.1L1184.5 553.9M920.3 563.7L950.3 559.5L980.3 555.5L986.3 554.8L992.3 554L998.3 553.3L1004.3 552.7L1010.3 552L1016.3 551.5L1022.3 551L1028.3 550.5L1034.3 550.2L1040.3 549.9L1046.3 549.7L1052.3 549.7L1058.3 549.7L1064.3 549.9L1070.3 550.1L1076.3 550.5L1082.3 550.9L1088.3 551.4L1094.3 552L1100.3 552.7L1106.3 553.4L1112.3 554.1L1118.3 554.9L1124.3 555.8L1130.3 556.6L1136.3 557.5L1142.3 558.4L1172.3 563L1188.1 565.5M919.1 574.1L949.1 570.1L979.1 566.3L985.1 565.6L991.1 565L997.1 564.3L1003.1 563.8L1009.1 563.2L1015.1 562.8L1021.1 562.4L1027.1 562.1L1033.1 561.8L1039.1 561.6L1045.1 561.6L1051.1 561.6L1057.1 561.7L1063.1 561.9L1069.1 562.1L1075.1 562.5L1081.1 562.9L1087.1 563.4L1093.1 563.9L1099.1 564.5L1105.1 565.2L1111.1 565.9L1117.1 566.6L1123.1 567.4L1129.1 568.1L1135.1 568.9L1141.1 569.7L1147.1 570.6L1177.1 574.9L1191.7 577M917.8 584.6L947.8 580.7L953.8 579.9L959.8 579.2L965.8 578.5L971.8 577.8L977.8 577.2L983.8 576.6L989.8 576L995.8 575.5L1001.8 575L1007.8 574.6L1013.8 574.2L1019.8 573.9L1025.8 573.7L1031.8 573.5L1037.8 573.4L1043.8 573.4L1049.8 573.5L1055.8 573.6L1061.8 573.8L1067.8 574.1L1073.8 574.5L1079.8 574.9L1085.8 575.3L1091.8 575.8L1097.8 576.4L1103.8 577L1109.8 577.6L1115.8 578.3L1121.8 579L1127.8 579.7L1133.8 580.4L1139.8 581.1L1145.8 581.9L1151.8 582.7L1181.8 586.6L1195.2 588.5M740.7 621.1L770.7 616.9L800.7 612.6L830.7 608.4L860.7 604.2L890.7 600.1L920.7 596.1L926.7 595.4L932.7 594.6L938.7 593.9L944.7 593.2L950.7 592.5L956.7 591.8L962.7 591.2L968.7 590.6L974.7 590L980.7 589.5L986.7 589L992.7 588.5L998.7 588.2L1004.7 587.8L1010.7 587.5L1016.7 587.3L1022.7 587.1L1028.7 587L1034.7 587L1040.7 587L1046.7 587.1L1052.7 587.3L1058.7 587.5L1064.7 587.7L1070.7 588.1L1076.7 588.4L1082.7 588.8L1088.7 589.3L1094.7 589.8L1100.7 590.3L1106.7 590.9L1112.7 591.5L1118.7 592.1L1124.7 592.7L1130.7 593.4L1136.7 594L1142.7 594.7L1148.7 595.4L1154.7 596.1L1184.7 599.7L1207.6 602.6M744.3 632L774.3 627.8L804.3 623.5L834.3 619.3L864.3 615.2L894.3 611.1L924.3 607.3L930.3 606.6L936.3 605.9L942.3 605.2L948.3 604.5L954.3 603.9L960.3 603.3L966.3 602.7L972.3 602.2L978.3 601.7L984.3 601.2L990.3 600.8L996.3 600.4L1002.3 600.1L1008.3 599.8L1014.3 599.6L1020.3 599.5L1026.3 599.4L1032.3 599.4L1038.3 599.4L1044.3 599.5L1050.3 599.7L1056.3 599.9L1062.3 600.1L1068.3 600.4L1074.3 600.8L1080.3 601.1L1086.3 601.6L1092.3 602L1098.3 602.5L1104.3 603L1110.3 603.6L1116.3 604.2L1122.3 604.8L1128.3 605.4L1134.3 606L1140.3 606.6L1146.3 607.3L1152.3 608L1182.3 611.4L1211.3 614.8M748 642.9L778 638.7L808 634.4L838 630.2L868 626.1L898 622.1L928 618.3L934 617.6L940 616.9L946 616.2L952 615.5L958 614.9L964 614.3L970 613.8L976 613.3L982 612.8L988 612.3L994 612L1000 611.6L1006 611.4L1012 611.1L1018 611L1024 610.9L1030 610.8L1036 610.8L1042 610.9L1048 611L1054 611.2L1060 611.4L1066 611.7L1072 612L1078 612.4L1084 612.8L1090 613.3L1096 613.7L1102 614.3L1108 614.8L1114 615.4L1120 615.9L1126 616.5L1132 617.2L1138 617.8L1144 618.4L1150 619.1L1156 619.8L1186 623.2L1215 626.7M751.6 653.8L781.6 649.6L811.6 645.3L841.6 641.1L871.6 637L901.6 633L907.6 632.2L913.6 631.5L919.6 630.7L925.6 630L931.6 629.3L937.6 628.5L943.6 627.9L949.6 627.2L955.6 626.6L961.6 626L967.6 625.4L973.6 624.9L979.6 624.4L985.6 623.9L991.6 623.5L997.6 623.2L1003.6 622.9L1009.6 622.6L1015.6 622.4L1021.6 622.3L1027.6 622.2L1033.6 622.2L1039.6 622.3L1045.6 622.4L1051.6 622.5L1057.6 622.7L1063.6 623L1069.6 623.3L1075.6 623.7L1081.6 624.1L1087.6 624.5L1093.6 625L1099.6 625.5L1105.6 626L1111.6 626.6L1117.6 627.1L1123.6 627.7L1129.6 628.3L1135.6 629L1141.6 629.6L1147.6 630.3L1153.6 630.9L1183.6 634.4L1213.6 637.9L1218.8 638.5M755.3 664.7L785.3 660.5L815.3 656.2L845.3 652.1L875.3 647.9L905.3 644L911.3 643.2L917.3 642.4L923.3 641.7L929.3 640.9L935.3 640.2L941.3 639.5L947.3 638.9L953.3 638.2L959.3 637.6L965.3 637L971.3 636.5L977.3 636L983.3 635.5L989.3 635.1L995.3 634.7L1001.3 634.4L1007.3 634.1L1013.3 633.9L1019.3 633.8L1025.3 633.7L1031.3 633.6L1037.3 633.7L1043.3 633.7L1049.3 633.9L1055.3 634.1L1061.3 634.3L1067.3 634.6L1073.3 634.9L1079.3 635.3L1085.3 635.7L1091.3 636.2L1097.3 636.7L1103.3 637.2L1109.3 637.7L1115.3 638.3L1121.3 638.9L1127.3 639.5L1133.3 640.1L1139.3 640.8L1145.3 641.4L1151.3 642.1L1157.3 642.8L1187.3 646.2L1217.3 649.8L1222.5 650.4M758.9 675.6L788.9 671.4L818.9 667.2L848.9 663L878.9 658.9L908.9 654.9L914.9 654.1L920.9 653.4L926.9 652.6L932.9 651.9L938.9 651.2L944.9 650.6L950.9 649.9L956.9 649.3L962.9 648.7L968.9 648.1L974.9 647.6L980.9 647.1L986.9 646.7L992.9 646.3L998.9 645.9L1004.9 645.6L1010.9 645.4L1016.9 645.2L1022.9 645.1L1028.9 645.1L1034.9 645.1L1040.9 645.1L1046.9 645.2L1052.9 645.4L1058.9 645.6L1064.9 645.9L1070.9 646.2L1076.9 646.6L1082.9 647L1088.9 647.4L1094.9 647.9L1100.9 648.4L1106.9 648.9L1112.9 649.5L1118.9 650.1L1124.9 650.7L1130.9 651.3L1136.9 651.9L1142.9 652.6L1148.9 653.2L1154.9 653.9L1184.9 657.4L1214.9 660.9L1226.2 662.3M762.6 686.5L792.6 682.3L822.6 678.1L852.6 673.9L882.6 669.8L912.6 665.8L918.6 665.1L924.6 664.3L930.6 663.6L936.6 662.9L942.6 662.2L948.6 661.6L954.6 660.9L960.6 660.3L966.6 659.7L972.6 659.2L978.6 658.7L984.6 658.3L990.6 657.8L996.6 657.5L1002.6 657.2L1008.6 656.9L1014.6 656.7L1020.6 656.6L1026.6 656.5L1032.6 656.5L1038.6 656.5L1044.6 656.6L1050.6 656.7L1056.6 656.9L1062.6 657.2L1068.6 657.5L1074.6 657.8L1080.6 658.2L1086.6 658.7L1092.6 659.1L1098.6 659.6L1104.6 660.2L1110.6 660.7L1116.6 661.3L1122.6 661.9L1128.6 662.5L1134.6 663.1L1140.6 663.7L1146.6 664.4L1152.6 665.1L1182.6 668.5L1212.6 672L1229.9 674.1M766.2 697.4L796.2 693.2L826.2 689L856.2 684.8L886.2 680.7L916.2 676.8L922.2 676.1L928.2 675.3L934.2 674.6L940.2 673.9L946.2 673.2L952.2 672.6L958.2 672L964.2 671.4L970.2 670.8L976.2 670.3L982.2 669.8L988.2 669.4L994.2 669L1000.2 668.7L1006.2 668.4L1012.2 668.2L1018.2 668L1024.2 667.9L1030.2 667.9L1036.2 667.9L1042.2 668L1048.2 668.1L1054.2 668.3L1060.2 668.5L1066.2 668.8L1072.2 669.1L1078.2 669.5L1084.2 669.9L1090.2 670.4L1096.2 670.8L1102.2 671.4L1108.2 671.9L1114.2 672.5L1120.2 673L1126.2 673.7L1132.2 674.3L1138.2 674.9L1144.2 675.6L1150.2 676.2L1156.2 676.9L1186.2 680.3L1216.2 683.9L1233.6 686M769.9 708.3L799.9 704.1L829.9 699.9L859.9 695.7L889.9 691.6L919.9 687.8L925.9 687L931.9 686.3L937.9 685.6L943.9 684.9L949.9 684.3L955.9 683.6L961.9 683L967.9 682.5L973.9 681.9L979.9 681.4L985.9 681L991.9 680.6L997.9 680.2L1003.9 679.9L1009.9 679.7L1015.9 679.5L1021.9 679.4L1027.9 679.3L1033.9 679.3L1039.9 679.3L1045.9 679.4L1051.9 679.6L1057.9 679.8L1063.9 680.1L1069.9 680.4L1075.9 680.8L1081.9 681.2L1087.9 681.6L1093.9 682.1L1099.9 682.6L1105.9 683.1L1111.9 683.7L1117.9 684.2L1123.9 684.8L1129.9 685.4L1135.9 686.1L1141.9 686.7L1147.9 687.4L1153.9 688L1183.9 691.5L1213.9 695L1237.3 697.8M773.5 719.2L803.5 715L833.5 710.8L863.5 706.6L893.5 702.6L923.5 698.7L929.5 698L935.5 697.3L941.5 696.6L947.5 695.9L953.5 695.3L959.5 694.7L965.5 694.1L971.5 693.5L977.5 693L983.5 692.6L989.5 692.2L995.5 691.8L1001.5 691.5L1007.5 691.2L1013.5 691L1019.5 690.8L1025.5 690.7L1031.5 690.7L1037.5 690.7L1043.5 690.8L1049.5 691L1055.5 691.2L1061.5 691.4L1067.5 691.7L1073.5 692L1079.5 692.4L1085.5 692.8L1091.5 693.3L1097.5 693.8L1103.5 694.3L1109.5 694.8L1115.5 695.4L1121.5 696L1127.5 696.6L1133.5 697.2L1139.5 697.9L1145.5 698.5L1151.5 699.2L1157.5 699.9L1187.5 703.3L1217.5 706.9L1241 709.7M777.2 730.1L807.2 725.9L837.2 721.7L867.2 717.5L897.2 713.5L927.2 709.7L933.2 709L939.2 708.3L945.2 707.6L951.2 707L957.2 706.3L963.2 705.7L969.2 705.2L975.2 704.7L981.2 704.2L987.2 703.7L993.2 703.3L999.2 703L1005.2 702.7L1011.2 702.5L1017.2 702.3L1023.2 702.2L1029.2 702.1L1035.2 702.1L1041.2 702.2L1047.2 702.3L1053.2 702.5L1059.2 702.7L1065.2 703L1071.2 703.3L1077.2 703.7L1083.2 704.1L1089.2 704.5L1095.2 705L1101.2 705.5L1107.2 706L1113.2 706.6L1119.2 707.2L1125.2 707.8L1131.2 708.4L1137.2 709L1143.2 709.7L1149.2 710.3L1155.2 711L1185.2 714.5L1215.2 718L1244.7 721.6M780.8 741L810.8 736.8L840.8 732.6L870.8 728.4L900.8 724.4L906.8 723.7L912.8 722.9L918.8 722.1L924.8 721.4L930.8 720.7L936.8 720L942.8 719.3L948.8 718.6L954.8 718L960.8 717.4L966.8 716.8L972.8 716.3L978.8 715.8L984.8 715.3L990.8 714.9L996.8 714.5L1002.8 714.2L1008.8 714L1014.8 713.8L1020.8 713.6L1026.8 713.6L1032.8 713.5L1038.8 713.6L1044.8 713.7L1050.8 713.8L1056.8 714L1062.8 714.3L1068.8 714.6L1074.8 714.9L1080.8 715.3L1086.8 715.8L1092.8 716.2L1098.8 716.7L1104.8 717.3L1110.8 717.8L1116.8 718.4L1122.8 719L1128.8 719.6L1134.8 720.2L1140.8 720.8L1146.8 721.5L1152.8 722.2L1182.8 725.6L1212.8 729.1L1242.8 732.8L1248.4 733.4M784.5 751.9L814.5 747.7L844.5 743.5L874.5 739.4L904.5 735.4L910.5 734.6L916.5 733.8L922.5 733.1L928.5 732.4L934.5 731.7L940.5 731L946.5 730.3L952.5 729.6L958.5 729L964.5 728.4L970.5 727.9L976.5 727.4L982.5 726.9L988.5 726.5L994.5 726.1L1000.5 725.8L1006.5 725.5L1012.5 725.3L1018.5 725.1L1024.5 725L1030.5 725L1036.5 725L1042.5 725L1048.5 725.2L1054.5 725.4L1060.5 725.6L1066.5 725.9L1072.5 726.2L1078.5 726.6L1084.5 727L1090.5 727.5L1096.5 727.9L1102.5 728.5L1108.5 729L1114.5 729.6L1120.5 730.1L1126.5 730.8L1132.5 731.4L1138.5 732L1144.5 732.7L1150.5 733.3L1156.5 734L1186.5 737.4L1216.5 741L1246.5 744.6L1252.1 745.3M788.1 762.8L818.1 758.6L848.1 754.4L878.1 750.3L908.1 746.3L914.1 745.6L920.1 744.8L926.1 744.1L932.1 743.3L938.1 742.6L944.1 742L950.1 741.3L956.1 740.7L962.1 740.1L968.1 739.5L974.1 739L980.1 738.5L986.1 738L992.1 737.6L998.1 737.3L1004.1 737L1010.1 736.8L1016.1 736.6L1022.1 736.4L1028.1 736.4L1034.1 736.4L1040.1 736.4L1046.1 736.5L1052.1 736.7L1058.1 736.9L1064.1 737.2L1070.1 737.5L1076.1 737.9L1082.1 738.3L1088.1 738.7L1094.1 739.2L1100.1 739.7L1106.1 740.2L1112.1 740.8L1118.1 741.3L1124.1 741.9L1130.1 742.5L1136.1 743.2L1142.1 743.8L1148.1 744.5L1154.1 745.1L1184.1 748.6L1214.1 752.1L1244.1 755.7L1255.8 757.2M979.2 164.8L1168.8 712M989.9 163.5L1178.7 712M1000.5 162.2L1188.6 712M968.5 166L1158.8 712M976.5 188.9L969.5 203.9L928.6 583.4M928.6 583.4L968.5 712M976.5 188.9L939.4 582M939.4 582L979.7 712M985.6 215L978.6 230L950.2 580.6M950.2 580.6L990.9 712M985.6 215L961 579.3M961 579.3L1002.1 712M996.1 245.2L989 260.2L971.8 578.1M971.8 578.1L1013.3 712M996.1 245.2L982.6 576.9M982.6 576.9L1024.5 712M1008.3 280.2L1001.1 295.2L993.4 575.9M993.4 575.9L1035.6 712M1008.3 280.2L1004.2 575.1M1004.2 575.1L1046.6 712M1022.5 321L1015.1 336L1015 574.4M1015 574.4L1057.6 712M1022.5 321L1025.8 573.9M1025.8 573.9L1068.6 712M1039.3 369L1031.6 384L1036.6 573.7M1036.6 573.7L1079.5 712M1039.3 369L1047.4 573.7M1047.4 573.7L1090.3 712M1059.1 425.9L1051.1 440.9L1058.2 573.9M1058.2 573.9L1101 712M1059.1 425.9L1069 574.4M1069 574.4L1111.6 712M1083 494.3L1074.5 509.3L1079.8 575.1M1079.8 575.1L1122.2 712M1083 494.3L1090.6 576M1090.6 576L1132.7 712M1096.8 534L1101.4 577M1101.4 577L1143.2 712M747 608.8L781.5 712M757.1 607.4L791.9 712M767.1 605.9L802.2 712M777.2 604.5L812.6 712M787.2 603.1L823 712M797.3 601.7L833.3 712M807.3 600.3L843.7 712M817.4 598.8L854 712M827.4 597.4L864.4 712M837.4 596L874.7 712M847.5 594.6L885 712M857.5 593.2L895.4 712M867.6 591.8L905.7 712M877.6 590.4L916 712M887.7 589L926.3 712M897.7 587.6L936.6 712M907.8 586.2L946.9 712M917.8 584.8L957.2 712" fill="none" stroke="#008c00" stroke-width="0.85" clip-path="url(#c2)"/>
<path d="M737 610.2L771.1 712M968.5 166L1011.2 161M1011.2 161L1198.5 712" fill="none" stroke="#008c00" stroke-width="0.85"/>
<polygon points="415.5,289 917.8,584.6 737,610.2 232,312.4" fill="#0099e0"/>
<path d="M415.5 289L232 312.4M428.5 296.6L245 320.1M441.4 304.3L258.1 327.8M454.4 311.9L271.1 335.5M467.4 319.5L284.2 343.2M480.4 327.2L297.2 350.8M493.3 334.8L310.2 358.5M506.3 342.4L323.3 366.2M519.3 350.1L336.4 373.9M532.3 357.7L349.4 381.6M545.3 365.4L362.5 389.3M558.3 373L375.5 397M571.3 380.7L388.6 404.8M584.3 388.3L401.7 412.5M597.3 396L414.8 420.2M610.3 403.6L427.8 427.9M623.3 411.3L440.9 435.6M636.3 418.9L454 443.3M649.3 426.6L467.1 451M662.4 434.3L480.2 458.7M675.4 441.9L493.3 466.5M688.4 449.6L506.4 474.2M701.4 457.3L519.5 481.9M714.5 464.9L532.6 489.6M727.5 472.6L545.7 497.4M740.5 480.3L558.8 505.1M753.6 488L571.9 512.8M766.6 495.6L585 520.6M415.5 289L766.6 495.6M397.3 291.3L748.6 498.1M379 293.7L730.5 500.6M360.7 296L712.4 503.1M342.4 298.3L694.3 505.6M324.1 300.7L676.1 508.1M305.7 303L658 510.6M287.3 305.3L639.8 513.1M268.9 307.7L621.5 515.6M250.5 310L603.3 518.1M232 312.4L585 520.6M783.2 505.4L601.7 530.4M790 509.4L608.5 534.4M796.7 513.3L615.2 538.4M803.4 517.3L622 542.4M810.1 521.2L628.7 546.4M816.8 525.2L635.5 550.3M823.6 529.1L642.3 554.3M830.3 533.1L649 558.3M837 537.1L655.8 562.3M843.7 541L662.5 566.3M850.5 545L669.3 570.3M857.2 548.9L676.1 574.3M863.9 552.9L682.8 578.3M870.7 556.9L689.6 582.3M877.4 560.8L696.4 586.2M884.1 564.8L703.1 590.2M890.9 568.7L709.9 594.2M897.6 572.7L716.7 598.2M904.3 576.7L723.5 602.2M911.1 580.6L730.2 606.2M917.8 584.6L737 610.2M783.2 505.4L917.8 584.6M774.2 506.7L908.8 585.9M765.2 507.9L899.8 587.1M756.2 509.1L890.8 588.4M747.1 510.4L881.8 589.7M738.1 511.6L872.8 591M729 512.9L863.8 592.2M720 514.1L854.8 593.5M710.9 515.4L845.8 594.8M701.9 516.6L836.8 596.1M692.8 517.9L827.7 597.4M683.7 519.1L818.7 598.6M674.6 520.4L809.6 599.9M665.5 521.6L800.6 601.2M656.4 522.9L791.5 602.5M647.3 524.1L782.4 603.8M638.2 525.4L773.4 605.1M629.1 526.6L764.3 606.3M620 527.9L755.2 607.6M610.8 529.2L746.1 608.9M601.7 530.4L737 610.2M766.6 495.6L783.2 505.4M774.2 506.7L766.6 495.6M748.6 498.1L765.2 507.9M756.2 509.1L730.5 500.6M730.5 500.6L747.1 510.4M738.1 511.6L730.5 500.6M712.4 503.1L729 512.9M720 514.1L694.3 505.6M694.3 505.6L710.9 515.4M701.9 516.6L694.3 505.6M676.1 508.1L692.8 517.9M683.7 519.1L658 510.6M658 510.6L674.6 520.4M665.5 521.6L658 510.6M639.8 513.1L656.4 522.9M647.3 524.1L621.5 515.6M621.5 515.6L638.2 525.4M629.1 526.6L621.5 515.6M603.3 518.1L620 527.9M610.8 529.2L585 520.6M585 520.6L601.7 530.4" fill="none" stroke="#008c00" stroke-width="0.85"/>
<polygon points="462,-128 968.5,166 917.8,584.6 415.5,289" fill="#00aaff"/>
<path d="M928 479h3v1h-3zM927 480h3v1h-3zM927 481h3v1h-3zM927 482h3v1h-3zM927 483h3v1h-3zM927 484h3v1h-3zM927 485h3v1h-3zM927 486h3v1h-3zM927 487h3v1h-3zM926 488h3v1h-3zM926 489h3v1h-3zM926 490h3v1h-3zM926 491h3v1h-3zM926 492h3v1h-3zM926 493h3v1h-3zM926 494h3v1h-3zM926 495h3v1h-3zM925 496h3v1h-3zM925 497h3v1h-3zM925 498h3v1h-3zM925 499h3v1h-3zM924 500h4v1h-4zM924 501h4v1h-4zM924 502h4v1h-4zM924 503h4v1h-4zM924 504h4v1h-4zM924 505h3v1h-3zM924 506h3v1h-3zM924 507h3v1h-3zM923 508h4v1h-4zM922 509h5v1h-5zM922 510h5v1h-5zM922 511h5v1h-5zM922 512h5v1h-5zM920 513h6v1h-6zM920 514h6v1h-6zM920 515h6v1h-6zM920 516h6v1h-6zM920 517h6v1h-6zM919 518h7v1h-7zM919 519h7v1h-7zM919 520h7v1h-7zM918 521h8v1h-8zM918 522h8v1h-8zM918 523h8v1h-8zM918 524h8v1h-8zM918 525h7v1h-7zM918 526h7v1h-7zM916 527h9v1h-9zM916 528h9v1h-9zM916 529h8v1h-8zM916 530h8v1h-8zM916 531h8v1h-8zM916 532h8v1h-8zM917 533h7v1h-7zM917 534h7v1h-7zM917 535h7v1h-7zM917 536h7v1h-7zM917 537h7v1h-7zM917 538h6v1h-6zM917 539h6v1h-6zM917 540h6v1h-6zM918 541h5v1h-5zM917 542h6v1h-6zM917 543h6v1h-6zM917 544h6v1h-6zM917 545h6v1h-6zM917 546h5v1h-5zM917 547h5v1h-5zM917 548h5v1h-5zM917 549h5v1h-5zM916 550h6v1h-6zM916 551h6v1h-6zM916 552h6v1h-6zM916 553h6v1h-6zM915 554h6v1h-6zM915 555h6v1h-6zM918 556h4v1h-4zM918 557h3v1h-3zM918 558h3v1h-3zM917 559h4v1h-4zM917 560h4v1h-4zM917 561h4v1h-4zM917 562h4v1h-4zM917 563h4v1h-4zM917 564h4v1h-4zM917 565h4v1h-4zM917 566h4v1h-4zM917 567h4v1h-4zM917 568h4v1h-4zM917 569h3v1h-3zM917 570h3v1h-3zM917 571h3v1h-3zM917 572h3v1h-3zM917 573h3v1h-3zM916 574h4v1h-4zM916 575h4v1h-4zM916 576h4v1h-4zM916 577h3v1h-3z" fill="#0033ff"/>
<path d="M921 517h2v6h-2zM919 536h2v4h-2zM918 547h1v4h-1z" fill="#00aaff"/>
<polygon points="832.4,87 839.1,90.9 836.5,112.9 829.8,108.9" fill="#00ffdd" clip-path="url(#c3)"/>
<polygon points="839.1,90.9 845.9,94.9 843.3,116.8 836.5,112.9" fill="#00ffdd" clip-path="url(#c3)"/>
<polygon points="845.9,94.9 852.7,98.8 850.1,120.8 843.3,116.8" fill="#00ffdd" clip-path="url(#c3)"/>
<polygon points="852.7,98.8 859.5,102.7 856.9,124.7 850.1,120.8" fill="#00ffdd" clip-path="url(#c3)"/>
<polygon points="859.5,102.7 866.3,106.7 863.7,128.7 856.9,124.7" fill="#00ffdd" clip-path="url(#c3)"/>
<polygon points="866.3,106.7 873.1,110.6 870.5,132.6 863.7,128.7" fill="#00ffdd" clip-path="url(#c3)"/>
<polygon points="873.1,110.6 879.9,114.6 876.3,144.6 869.6,140.7" fill="#00ffdd" clip-path="url(#c3)"/>
<polygon points="879.9,114.6 886.7,118.5 882.1,157 875.3,153" fill="#00ffdd" clip-path="url(#c3)"/>
<polygon points="886.7,118.5 893.5,122.5 888.9,160.9 882.1,157" fill="#00ffdd" clip-path="url(#c3)"/>
<polygon points="893.5,122.5 900.3,126.4 895.7,164.9 888.9,160.9" fill="#00ffdd" clip-path="url(#c3)"/>
<polygon points="900.3,126.4 907.2,130.4 902.5,168.8 895.7,164.9" fill="#00ffdd" clip-path="url(#c3)"/>
<polygon points="907.2,130.4 914,134.3 909.3,172.8 902.5,168.8" fill="#00ffdd" clip-path="url(#c3)"/>
<polygon points="914,134.3 920.8,138.3 916.2,176.7 909.3,172.8" fill="#00ffdd" clip-path="url(#c3)"/>
<polygon points="920.8,138.3 927.6,142.3 923,180.7 916.2,176.7" fill="#00ffdd" clip-path="url(#c3)"/>
<polygon points="927.6,142.3 934.4,146.2 929.8,184.7 923,180.7" fill="#00ffdd" clip-path="url(#c3)"/>
<polygon points="934.4,146.2 941.2,150.2 936.6,188.6 929.8,184.7" fill="#00ffdd" clip-path="url(#c3)"/>
<polygon points="941.2,150.2 948,154.1 944.4,184.1 937.6,180.2" fill="#00ffdd" clip-path="url(#c3)"/>
<polygon points="948,154.1 954.9,158.1 951.2,188.1 944.4,184.1" fill="#00ffdd" clip-path="url(#c3)"/>
<polygon points="954.9,158.1 961.7,162 958,192.1 951.2,188.1" fill="#00ffdd" clip-path="url(#c3)"/>
<polygon points="961.7,162 968.5,166 965.8,188 959,184" fill="#00ffdd" clip-path="url(#c3)"/>
<polygon points="815.6,77.2 832.4,87 829.8,108.9 813.9,91.5" fill="#00ffdd" clip-path="url(#c3)"/>
<path d="M462 -128L415.5 289M475 -120.4L428.4 296.6M488 -112.9L441.3 304.2M501.1 -105.3L454.2 311.8M514.1 -97.8L467.2 319.4M527.1 -90.2L480.1 327M540.2 -82.6L493 334.6M553.2 -75L506 342.2M566.3 -67.5L518.9 349.9M579.4 -59.9L531.9 357.5M592.4 -52.3L544.9 365.1M605.5 -44.7L557.8 372.8M618.6 -37.1L570.8 380.4M631.7 -29.5L583.8 388M644.8 -21.9L596.8 395.7M657.9 -14.3L609.8 403.3M671 -6.7L622.8 411M684.1 0.9L635.8 418.6M697.2 8.5L648.8 426.3M710.3 16.2L661.8 433.9M723.5 23.8L674.8 441.6M736.6 31.4L687.8 449.3M749.8 39L700.9 456.9M762.9 46.7L713.9 464.6M776.1 54.3L727 472.3M789.2 61.9L740 480M802.4 69.6L753.1 487.7M815.6 77.2L766.2 495.4M832.4 87L782.8 505.1M839.1 90.9L789.5 509.1M845.9 94.9L796.3 513.1M852.7 98.8L803 517M859.5 102.7L809.7 521M866.3 106.7L816.5 525M873.1 110.6L823.2 528.9M879.9 114.6L830 532.9M886.7 118.5L836.7 536.9M893.5 122.5L843.5 540.9M900.3 126.4L850.2 544.8M907.2 130.4L857 548.8M914 134.3L863.7 552.8M920.8 138.3L870.5 556.7M927.6 142.3L877.2 560.7M934.4 146.2L884 564.7M941.2 150.2L890.7 568.7M948 154.1L897.5 572.7M954.9 158.1L904.3 576.6M961.7 162L911 580.6M968.5 166L917.8 584.6M462 -128L968.5 166M831.5 93.9L967.7 173M831.5 93.9L815.6 77.2M460.4 -113.8L966.8 180.3M829.8 108.9L965.8 188M829.8 108.9L812 107.2M458.7 -98.1L964.9 196M827.8 125.4L963.8 204.5M827.8 125.4L812 107.2M456.8 -80.9L962.8 213.3M825.7 143.3L961.7 222.4M825.7 143.3L807.8 143.1M454.7 -62.3L960.5 231.9M823.4 162.7L959.3 241.8M823.4 162.7L807.8 143.1M452.4 -42.2L958.1 252.1M820.9 183.6L956.8 262.7M820.9 183.6L802.9 184.8M450 -20.7L955.5 273.7M818.3 205.9L954.1 285.1M818.3 205.9L802.9 184.8M447.5 1.9L952.7 296.4M815.6 228.6L951.3 307.8M815.6 228.6L797.5 230.2M445 24.5L950 319.1M812.9 251.3L948.6 330.4M812.9 251.3L797.5 230.2M442.5 47.1L947.2 341.8M810.2 273.9L945.8 353.1M810.2 273.9L792.1 275.4M440 69.7L944.5 364.4M807.5 296.5L943.1 375.7M807.5 296.5L792.1 275.4M437.4 92.2L941.7 387.1M804.8 319.1L940.4 398.4M804.8 319.1L786.8 320.6M434.9 114.7L939 409.7M802.2 341.7L937.6 421M802.2 341.7L786.8 320.6M432.4 137.2L936.2 432.3M799.5 364.3L934.9 443.6M799.5 364.3L781.5 365.8M429.9 159.7L933.5 454.8M796.8 386.8L932.1 466.1M796.8 386.8L781.5 365.8M427.4 182.2L930.8 477.4M794.2 409.3L929.4 488.7M794.2 409.3L776.1 410.8M424.9 204.7L928.1 499.9M791.5 431.8L926.7 511.2M791.5 431.8L776.1 410.8M422.4 226.9L925.3 522.3M788.9 453.8L924 533.2M788.9 453.8L771 454.6M420 248.4L922.7 543.8M786.4 474.9L921.5 554.3M786.4 474.9L771 454.6M417.7 269.1L920.2 564.6M784 495.3L919 574.7M784 495.3L766.2 495.4M415.5 289L917.8 584.6" fill="none" stroke="#008c00" stroke-width="0.85"/>
<path d="M900 584h5v2h-5zM907 583h6v2h-6z" fill="#0033ff"/>
<g font-family="'Liberation Mono',monospace" font-size="15px" fill="#000" shape-rendering="crispEdges">
<text x="277" y="115" textLength="251" lengthAdjust="spacing">Principal Stress 1, Midplane</text>
<rect x="276" y="131" width="30" height="19" fill="#ff3300"/>
<rect x="276" y="151" width="30" height="19" fill="#ffaa00"/>
<rect x="276" y="171" width="30" height="19" fill="#e5ff00"/>
<rect x="276" y="191" width="30" height="19" fill="#77ff00"/>
<rect x="276" y="211" width="30" height="19" fill="#00ee00"/>
<rect x="276" y="231" width="30" height="19" fill="#00ee77"/>
<rect x="276" y="251" width="30" height="19" fill="#00ffdd"/>
<rect x="276" y="271" width="30" height="19" fill="#00aaff"/>
<rect x="276" y="291" width="30" height="19" fill="#0033ff"/>
<text x="318" y="135" textLength="79.2" lengthAdjust="spacing">1.356E+09</text>
<text x="318" y="155" textLength="79.2" lengthAdjust="spacing">1.179E+09</text>
<text x="318" y="175" textLength="79.2" lengthAdjust="spacing">1.003E+09</text>
<text x="318" y="195" textLength="79.2" lengthAdjust="spacing">8.262E+08</text>
<text x="318" y="215" textLength="79.2" lengthAdjust="spacing">6.496E+08</text>
<text x="318" y="235" textLength="79.2" lengthAdjust="spacing">4.729E+08</text>
<text x="318" y="255" textLength="79.2" lengthAdjust="spacing">2.963E+08</text>
<text x="318" y="275" textLength="79.2" lengthAdjust="spacing">1.197E+08</text>
<text x="318" y="295" textLength="88.0" lengthAdjust="spacing">-5.695E+07</text>
<text x="318" y="315" textLength="88.0" lengthAdjust="spacing">-2.336E+08</text>
</g>
<g shape-rendering="crispEdges">
<rect x="759" y="100" width="72" height="25" fill="#e1e1e1"/>
<rect x="782.5" y="101.5" width="22" height="21" fill="#e5e5e5" stroke="#0078d7"/>
</g>
<g transform="translate(763,105)" stroke="#4a4a4a" stroke-width="0.900" stroke-linejoin="round"><path d="M0.5 4.5h8.5v9h-8.5z" fill="#e3e3e3"/><path d="M0.5 4.5L5 0.5h8.5L9 4.5z" fill="#e3e3e3"/><path d="M9 4.5L13.5 0.5v8.5L9 13.5z" fill="#e3e3e3"/><path d="M9 2l2 2.5-2 2.5-2-2.5z" fill="#0000ff" stroke="#0000ff" stroke-width="0.5"/></g>
<g transform="translate(786,105)" stroke="#4a4a4a" stroke-width="0.900" stroke-linejoin="round"><path d="M0.5 4.5h8.5v9h-8.5z" fill="#0000ff"/><path d="M0.5 4.5L5 0.5h8.5L9 4.5z" fill="#e3e3e3"/><path d="M9 4.5L13.5 0.5v8.5L9 13.5z" fill="#e3e3e3"/></g>
<g transform="translate(809,105)" stroke="#4a4a4a" stroke-width="0.900" stroke-linejoin="round"><path d="M0.5 4.5h8.5v9h-8.5z" fill="#0000ff"/><path d="M0.5 4.5L5 0.5h8.5L9 4.5z" fill="#0000ff"/><path d="M9 4.5L13.5 0.5v8.5L9 13.5z" fill="#0000ff"/></g>
<g>
<path d="M1305 649L1287 638" stroke="#0000dd" stroke-width="4"/>
<circle cx="1289" cy="639" r="4.5" fill="#0000dd"/>
<path d="M1304.500 649L1307 622" stroke="#00e000" stroke-width="4"/>
<path d="M1302 623L1308.500 612L1312 624z" fill="#00e000"/>
<path d="M1305 649.500L1326 646" stroke="#ff0000" stroke-width="4"/>
<path d="M1324 640.500L1337 645L1326 652z" fill="#ff0000"/>
<circle cx="1310" cy="628" r="5" fill="#00f0f0"/>
<g font-family="'Liberation Sans',sans-serif" font-weight="bold" font-size="12px">
<text x="1337.500" y="649" fill="#ff0000">X</text>
<text x="1305" y="611" fill="#00e000">Y</text>
<text x="1275" y="639" fill="#0000dd">Z</text>
</g></g>
</svg>
</body></html>
